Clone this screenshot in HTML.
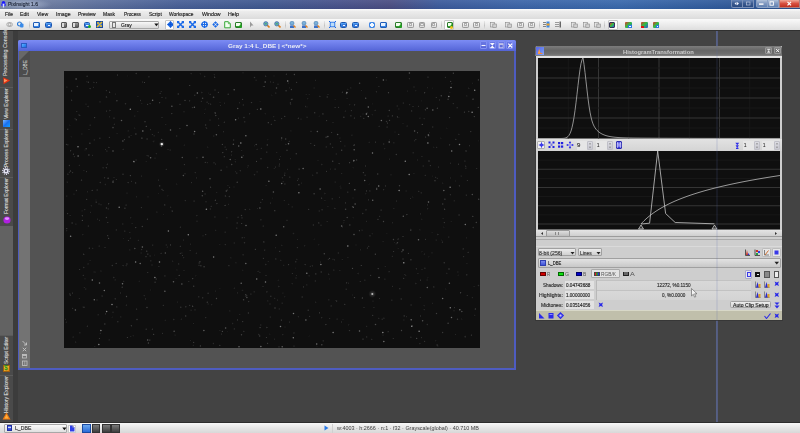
<!DOCTYPE html>
<html><head><meta charset="utf-8"><style>*{margin:0;padding:0;box-sizing:border-box}
html,body{width:800px;height:433px;overflow:hidden;background:#434343;font-family:"Liberation Sans",sans-serif;position:relative}
.a{position:absolute}
.t{position:absolute;white-space:nowrap;line-height:1}
</style></head><body>
<div class="a" style="left:0px;top:0px;width:800px;height:9px;background:linear-gradient(90deg,#8090ac 0,#6a7aa0 50px,#5a6e9c 100px,#465e96 180px,#3e5890 260px,#46508a 340px,#4a4c82 390px,#3a5a9c 440px,#3a64a8 520px,#3868ac 620px,#2f5a9c 720px,#2a4f8c 800px)"></div>
<div class="a" style="left:0px;top:0px;width:800px;height:9px;background:linear-gradient(rgba(255,255,255,0.08),rgba(0,0,0,0.05))"></div>
<div class="a" style="left:2px;top:0px;width:50px;height:9px;background:radial-gradient(ellipse 50% 60% at 50% 50%,rgba(200,212,235,0.55),rgba(200,212,235,0))"></div>
<svg class="a" style="left:0;top:0" width="9" height="9"><circle cx="3.5" cy="2.6" r="1.7" fill="#1a1aff"/><ellipse cx="3.5" cy="4.8" rx="2.5" ry="1.8" fill="#2a2af8"/><path d="M2.6 3.8 H4.4 L4.1 7.6 H2.9Z" fill="#dde4ff"/></svg>
<div class="t" style="left:8.40px;top:1.97px;font-size:5.35px;font-weight:normal;color:#1c2436;transform:scaleX(0.932);transform-origin:0 0;-webkit-text-stroke:0.15px currentColor;">PixInsight 1.6</div>
<div class="a" style="left:730.6px;top:0px;width:12px;height:7.5px;background:linear-gradient(#6a88b8,#3a5a90 50%,#2a4a80);border:0.5px solid #7a90b8;border-top:none;border-radius:0 0 0 2.5px"></div>
<div class="a" style="left:742.6px;top:0px;width:11px;height:7.5px;background:linear-gradient(#6a88b8,#3a5a90 50%,#2a4a80);border:0.5px solid #7a90b8;border-top:none;border-left:none"></div>
<div class="a" style="left:755.6px;top:0px;width:12.4px;height:7.5px;background:linear-gradient(#b0c0d8,#8098c0 50%,#6080b0);border:0.5px solid #8aa0c4;border-top:none;border-radius:0 0 0 2.5px"></div>
<div class="a" style="left:768px;top:0px;width:10.8px;height:7.5px;background:linear-gradient(#b0c0d8,#8098c0 50%,#6080b0);border:0.5px solid #8aa0c4;border-top:none;border-left:none"></div>
<div class="a" style="left:778.8px;top:0px;width:21.2px;height:7.5px;background:linear-gradient(#f0a898,#d85040 50%,#c03020);border:0.5px solid #b08080;border-top:none"></div>
<svg class="a" style="left:730px;top:0" width="70" height="8"><path d="M4.5 3.6 L6.5 2 V5.2Z M9 3.6 L7 2 V5.2Z" fill="#f0f4ff"/><rect x="16.5" y="2" width="3.5" height="3" fill="none" stroke="#b8c4dc" stroke-width="0.7"/><rect x="29" y="3.4" width="4.5" height="1.4" fill="#fff"/><rect x="40" y="1.8" width="3.4" height="3.4" fill="none" stroke="#fff" stroke-width="0.9"/><path d="M57.5 1.8 L61 5.4 M61 1.8 L57.5 5.4" stroke="#fff" stroke-width="1.2"/></svg>
<div class="a" style="left:0px;top:9px;width:800px;height:10px;background:linear-gradient(#fcfcfc 0,#ececec 25%,#dcdcdc 100%)"></div>
<div class="t" style="left:4.60px;top:12.09px;font-size:5.21px;font-weight:normal;color:#1e1e1e;transform:scaleX(0.966);transform-origin:0 0;-webkit-text-stroke:0.15px currentColor;">File</div>
<div class="t" style="left:20.29px;top:12.09px;font-size:5.21px;font-weight:normal;color:#1e1e1e;transform:scaleX(0.995);transform-origin:0 0;-webkit-text-stroke:0.15px currentColor;">Edit</div>
<div class="t" style="left:37.19px;top:12.09px;font-size:5.21px;font-weight:normal;color:#1e1e1e;transform:scaleX(0.994);transform-origin:0 0;-webkit-text-stroke:0.15px currentColor;">View</div>
<div class="t" style="left:55.68px;top:12.09px;font-size:5.21px;font-weight:normal;color:#1e1e1e;transform:scaleX(1.011);transform-origin:0 0;-webkit-text-stroke:0.15px currentColor;">Image</div>
<div class="t" style="left:77.70px;top:12.09px;font-size:5.21px;font-weight:normal;color:#1e1e1e;transform:scaleX(0.950);transform-origin:0 0;-webkit-text-stroke:0.15px currentColor;">Preview</div>
<div class="t" style="left:103.40px;top:12.09px;font-size:5.21px;font-weight:normal;color:#1e1e1e;transform:scaleX(0.957);transform-origin:0 0;-webkit-text-stroke:0.15px currentColor;">Mask</div>
<div class="t" style="left:123.72px;top:12.09px;font-size:5.21px;font-weight:normal;color:#1e1e1e;transform:scaleX(0.903);transform-origin:0 0;-webkit-text-stroke:0.15px currentColor;">Process</div>
<div class="t" style="left:148.50px;top:12.09px;font-size:5.21px;font-weight:normal;color:#1e1e1e;transform:scaleX(0.962);transform-origin:0 0;-webkit-text-stroke:0.15px currentColor;">Script</div>
<div class="t" style="left:169.41px;top:12.09px;font-size:5.21px;font-weight:normal;color:#1e1e1e;transform:scaleX(0.940);transform-origin:0 0;-webkit-text-stroke:0.15px currentColor;">Workspace</div>
<div class="t" style="left:201.99px;top:12.09px;font-size:5.21px;font-weight:normal;color:#1e1e1e;transform:scaleX(1.006);transform-origin:0 0;-webkit-text-stroke:0.15px currentColor;">Window</div>
<div class="t" style="left:228.48px;top:12.09px;font-size:5.21px;font-weight:normal;color:#1e1e1e;transform:scaleX(1.012);transform-origin:0 0;-webkit-text-stroke:0.15px currentColor;">Help</div>
<div class="a" style="left:0px;top:19px;width:800px;height:12px;background:linear-gradient(#fafafa,#dedede);border-bottom:1px solid #303030"></div>
<svg class="a" style="left:5.6px;top:21.3px" width="7" height="7"><circle cx="2.8" cy="3.5" r="2" fill="none" stroke="#a0a0a0" stroke-width="0.8"/><circle cx="4.4" cy="3.5" r="2" fill="none" stroke="#a0a0a0" stroke-width="0.8"/></svg>
<svg class="a" style="left:17px;top:21.3px" width="7" height="7"><circle cx="2.5" cy="3" r="2" fill="none" stroke="#2a7ad8" stroke-width="1.2"/><rect x="3" y="2.5" width="3.5" height="4" fill="#3a8ae8" rx="1"/></svg>
<div class="a" style="left:29px;top:20.5px;width:0.8px;height:9px;background:linear-gradient(#e8e8e8,#c4c4c4,#e8e8e8)"></div>
<div class="a" style="left:33px;top:21.8px;width:6.5px;height:6px;background:linear-gradient(#8cc4f8,#2a7ae0);border:0.6px solid #1e5cb8;border-radius:1px"></div>
<div class="a" style="left:34.3px;top:23.3px;width:4px;height:3px;background:#e8f2ff"></div>
<div class="a" style="left:45px;top:21.6px;width:6.5px;height:6.2px;background:linear-gradient(#5aa8f8,#1a6ad8);border:0.6px solid #1a56b0;border-radius:1.5px"></div>
<div class="a" style="left:46.5px;top:23.8px;width:4.5px;height:3.5px;background:#f4f8ff;border:0.5px solid #3a7ad8"></div>
<div class="a" style="left:55.6px;top:20.5px;width:0.8px;height:9px;background:linear-gradient(#e8e8e8,#c4c4c4,#e8e8e8)"></div>
<div class="a" style="left:60.6px;top:22.0px;width:6.5px;height:5.6px;background:linear-gradient(#9a9a9a,#5a5a5a);border:0.6px solid #555;border-radius:1px"></div>
<div class="a" style="left:61.9px;top:23.0px;width:2.2px;height:3.6px;background:#ddd"></div>
<div class="a" style="left:72px;top:22.0px;width:6.5px;height:5.6px;background:linear-gradient(#9a9a9a,#5a5a5a);border:0.6px solid #555;border-radius:1px"></div>
<div class="a" style="left:73.3px;top:23.0px;width:2.2px;height:3.6px;background:#ddd"></div>
<div class="a" style="left:83.8px;top:21.6px;width:6.5px;height:6.2px;background:linear-gradient(#5aa8f8,#1a6ad8);border:0.6px solid #1a56b0;border-radius:1.5px"></div>
<div class="a" style="left:85.3px;top:23.8px;width:4.5px;height:3.5px;background:#f4f8ff;border:0.5px solid #3a7ad8"></div>
<div class="a" style="left:87.5px;top:25px;width:3px;height:3px;background:#20b020;border-radius:50%"></div>
<div class="a" style="left:95.6px;top:21.3px;width:7px;height:7px;background:linear-gradient(135deg,#2060d0,#3a7ae8);border:0.5px solid #1a4aa0"></div>
<svg class="a" style="left:95.6px;top:21.3px" width="7" height="7"><path d="M1 6 L6 1" stroke="#f0c020" stroke-width="1.4"/><circle cx="2" cy="2" r="1" fill="#f0c020"/><circle cx="5" cy="5" r="1" fill="#f0c020"/></svg>
<div class="a" style="left:109.4px;top:20.7px;width:49.4px;height:8.2px;background:linear-gradient(#f8f8f8,#e4e4e4 60%,#dadada);border:0.6px solid #a8a8a8;border-radius:1px"></div>
<div class="a" style="left:111.9px;top:22px;width:4.6px;height:6px;border:0.6px solid #777;background:#e8e8e8"></div>
<div class="t" style="left:120.71px;top:23.30px;font-size:5.08px;font-weight:normal;color:#222;transform:scaleX(0.961);transform-origin:0 0;-webkit-text-stroke:0.15px currentColor;">Gray</div>
<svg class="a" style="left:153.5px;top:23.3px" width="5" height="4"><path d="M0.3 0.5 H4.5 L2.4 3.3Z" fill="#111"/></svg>
<div class="a" style="left:165px;top:20px;width:9px;height:10px;background:#fdfdfd;border:0.6px solid #c4c4c4;border-radius:1px"></div>
<svg class="a" style="left:166.5px;top:21.3px" width="6" height="7"><path d="M3.5 0 L7 3.5 L3.5 7 L0 3.5Z" fill="#1a6ae8"/><path d="M3.5 0.5 V6.5 M0.5 3.5 H6.5" stroke="#0a4ac8" stroke-width="0.6"/></svg>
<svg class="a" style="left:177px;top:21.3px" width="7" height="7"><path d="M1 1 L6 6 M6 1 L1 6" stroke="#1a6ae8" stroke-width="1.5"/><path d="M0 0 H2.8 L0 2.8Z M7 0 V2.8 L4.2 0Z M0 7 V4.2 L2.8 7Z M7 7 H4.2 L7 4.2Z" fill="#1a6ae8"/></svg>
<svg class="a" style="left:189px;top:21.3px" width="7" height="7"><path d="M1 1 L6 6 M6 1 L1 6" stroke="#1a6ae8" stroke-width="1.5"/><path d="M0 0 H2.8 L0 2.8Z M7 0 V2.8 L4.2 0Z M0 7 V4.2 L2.8 7Z M7 7 H4.2 L7 4.2Z" fill="#1a6ae8"/></svg>
<svg class="a" style="left:200.6px;top:21.3px" width="7" height="7"><circle cx="3.5" cy="3.5" r="2.6" fill="none" stroke="#1a6ae8" stroke-width="1.4"/><path d="M3.5 0 V7 M0 3.5 H7" stroke="#1a6ae8" stroke-width="1"/></svg>
<svg class="a" style="left:212.3px;top:21.3px" width="7" height="7"><path d="M3.5 0.3 L5.3 2 H4.3 V2.8 H2.7 V2 H1.7Z M3.5 6.7 L5.3 5 H4.3 V4.2 H2.7 V5 H1.7Z M0.3 3.5 L2 1.7 V2.7 H2.8 V4.3 H2 V5.3Z M6.7 3.5 L5 1.7 V2.7 H4.2 V4.3 H5 V5.3Z" fill="#1a6ae8"/></svg>
<svg class="a" style="left:223.8px;top:21.3px" width="7" height="7.5"><path d="M0.7 0.7 H4.3 L6.3 2.7 V6.8 H0.7Z" fill="#f2fff0" stroke="#38a838" stroke-width="1"/><path d="M4.3 0.7 V2.7 H6.3" fill="#9ad890" stroke="#38a838" stroke-width="0.6"/></svg>
<div class="a" style="left:235px;top:21.6px;width:6.5px;height:6.3px;background:linear-gradient(#8ae07a,#2a9a2a);border:0.6px solid #2a7a2a;border-radius:1px"></div>
<div class="a" style="left:236.3px;top:22.8px;width:4px;height:3px;background:#f4fff0"></div>
<div class="a" style="left:238.5px;top:24.8px;width:3px;height:3px;background:#20a020;border-radius:50%"></div>
<svg class="a" style="left:248.7px;top:21.3px" width="5" height="7"><path d="M1 0.5 L4.5 4.5 L2.5 4.5 L1 6.5Z" fill="#9a9a9a"/></svg>
<div class="a" style="left:258.7px;top:20.5px;width:0.8px;height:9px;background:linear-gradient(#e8e8e8,#c4c4c4,#e8e8e8)"></div>
<svg class="a" style="left:262.5px;top:21.3px" width="7" height="7"><path d="M3.5 3.5 L6.5 6.5" stroke="#e08020" stroke-width="1.6"/><circle cx="2.8" cy="2.8" r="2.2" fill="#6aa0c8" stroke="#3a6a98" stroke-width="0.6"/><path d="M1.8 2.8 H3.8" stroke="#30c030" stroke-width="0.8"/></svg>
<svg class="a" style="left:274.4px;top:21.3px" width="7" height="7"><path d="M3.5 3.5 L6.5 6.5" stroke="#e08020" stroke-width="1.6"/><circle cx="2.8" cy="2.8" r="2.2" fill="#6aa0c8" stroke="#3a6a98" stroke-width="0.6"/><path d="M1.8 2.8 H3.8" stroke="#30c030" stroke-width="0.8"/></svg>
<div class="a" style="left:285px;top:20.5px;width:0.8px;height:9px;background:linear-gradient(#e8e8e8,#c4c4c4,#e8e8e8)"></div>
<svg class="a" style="left:289.4px;top:21.3px" width="7" height="7"><circle cx="3" cy="2.2" r="2" fill="#7ab0d8" stroke="#3a70a8" stroke-width="0.5"/><path d="M1 7 V4.5 H5 V7" fill="#3a70c8"/><path d="M4.5 4.5 L6.5 6.5" stroke="#e08020" stroke-width="1.4"/></svg>
<svg class="a" style="left:300.6px;top:21.3px" width="7" height="7"><circle cx="3" cy="2.2" r="2" fill="#7ab0d8" stroke="#3a70a8" stroke-width="0.5"/><path d="M1 7 V4.5 H5 V7" fill="#3a70c8"/><path d="M4.5 4.5 L6.5 6.5" stroke="#e08020" stroke-width="1.4"/></svg>
<svg class="a" style="left:312.5px;top:21.3px" width="7" height="7"><circle cx="3" cy="2.2" r="2" fill="#7ab0d8" stroke="#3a70a8" stroke-width="0.5"/><path d="M1 7 V4.5 H5 V7" fill="#3a70c8"/><path d="M4.5 4.5 L6.5 6.5" stroke="#e08020" stroke-width="1.4"/></svg>
<div class="a" style="left:324.4px;top:20.5px;width:0.8px;height:9px;background:linear-gradient(#e8e8e8,#c4c4c4,#e8e8e8)"></div>
<svg class="a" style="left:328.7px;top:21.3px" width="7" height="7"><rect x="1.2" y="1.2" width="4.6" height="4.6" fill="#bcdcf8" stroke="#1a6ae8" stroke-width="0.8"/><path d="M0 0 L1.5 1.5 M7 0 L5.5 1.5 M0 7 L1.5 5.5 M7 7 L5.5 5.5" stroke="#1a6ae8" stroke-width="1"/></svg>
<div class="a" style="left:340px;top:21.6px;width:6.5px;height:6.2px;background:linear-gradient(#5aa8f8,#1a6ad8);border:0.6px solid #1a56b0;border-radius:1.5px"></div>
<div class="a" style="left:341.5px;top:23.8px;width:4.5px;height:3.5px;background:#f4f8ff;border:0.5px solid #3a7ad8"></div>
<div class="a" style="left:352px;top:21.6px;width:6.5px;height:6.2px;background:linear-gradient(#5aa8f8,#1a6ad8);border:0.6px solid #1a56b0;border-radius:1.5px"></div>
<div class="a" style="left:353.5px;top:23.8px;width:4.5px;height:3.5px;background:#f4f8ff;border:0.5px solid #3a7ad8"></div>
<div class="a" style="left:363.5px;top:20.5px;width:0.8px;height:9px;background:linear-gradient(#e8e8e8,#c4c4c4,#e8e8e8)"></div>
<div class="a" style="left:368.7px;top:21.8px;width:6.5px;height:6px;background:radial-gradient(circle at 50% 50%,#f4f8ff 0,#f4f8ff 1.6px,#4a9af0 2px,#2a6ad8 3.5px);border-radius:2px"></div>
<div class="a" style="left:380px;top:21.8px;width:6.5px;height:6px;background:linear-gradient(#8cc4f8,#2a7ae0);border:0.6px solid #1e5cb8;border-radius:1px"></div>
<div class="a" style="left:381.3px;top:23.3px;width:4px;height:3px;background:#e8f2ff"></div>
<div class="a" style="left:390.6px;top:20.5px;width:0.8px;height:9px;background:linear-gradient(#e8e8e8,#c4c4c4,#e8e8e8)"></div>
<div class="a" style="left:395px;top:21.6px;width:6.5px;height:6.3px;background:linear-gradient(#8ae07a,#2a9a2a);border:0.6px solid #2a7a2a;border-radius:1px"></div>
<div class="a" style="left:396.3px;top:22.8px;width:4px;height:3px;background:#f4fff0"></div>
<div class="a" style="left:398.5px;top:24.8px;width:3px;height:3px;background:#20a020;border-radius:50%"></div>
<div class="a" style="left:407px;top:21.8px;width:6.5px;height:6px;background:linear-gradient(#fafafa,#dcdcdc);border:0.7px solid #9a9a9a;border-radius:1.2px"></div>
<div class="a" style="left:408.6px;top:23.3px;width:3.3px;height:3px;border:0.5px solid #b0b0b0;background:#eee"></div>
<div class="a" style="left:418.7px;top:21.8px;width:6.5px;height:6px;background:linear-gradient(#fafafa,#dcdcdc);border:0.7px solid #9a9a9a;border-radius:1.2px"></div>
<div class="a" style="left:420.3px;top:23.3px;width:3.3px;height:3px;border:0.5px solid #b0b0b0;background:#eee"></div>
<div class="a" style="left:430.6px;top:21.8px;width:6.5px;height:6px;background:linear-gradient(#fafafa,#dcdcdc);border:0.7px solid #9a9a9a;border-radius:1.2px"></div>
<div class="a" style="left:432.20000000000005px;top:23.3px;width:3.3px;height:3px;border:0.5px solid #b0b0b0;background:#eee"></div>
<div class="a" style="left:441px;top:20.5px;width:0.8px;height:9px;background:linear-gradient(#e8e8e8,#c4c4c4,#e8e8e8)"></div>
<div class="a" style="left:444.4px;top:20px;width:10.0px;height:10px;background:#fdfdfd;border:0.6px solid #c4c4c4;border-radius:1px"></div>
<div class="a" style="left:446.5px;top:21.6px;width:6.0px;height:6.3px;background:linear-gradient(#8ae07a,#2a9a2a);border:0.6px solid #2a7a2a;border-radius:1px"></div>
<div class="a" style="left:447.8px;top:22.8px;width:3.5px;height:3px;background:#f4fff0"></div>
<div class="a" style="left:450.0px;top:24.8px;width:3px;height:3px;background:#20a020;border-radius:50%"></div>
<div class="a" style="left:450px;top:25.5px;width:3px;height:3px;background:#f0c020;border-radius:50%"></div>
<div class="a" style="left:457.5px;top:20.5px;width:0.8px;height:9px;background:linear-gradient(#e8e8e8,#c4c4c4,#e8e8e8)"></div>
<div class="a" style="left:462px;top:21.8px;width:6.5px;height:6px;background:linear-gradient(#fafafa,#dcdcdc);border:0.7px solid #9a9a9a;border-radius:1.2px"></div>
<div class="a" style="left:463.6px;top:23.3px;width:3.3px;height:3px;border:0.5px solid #b0b0b0;background:#eee"></div>
<div class="a" style="left:473px;top:21.8px;width:6.5px;height:6px;background:linear-gradient(#fafafa,#dcdcdc);border:0.7px solid #9a9a9a;border-radius:1.2px"></div>
<div class="a" style="left:474.6px;top:23.3px;width:3.3px;height:3px;border:0.5px solid #b0b0b0;background:#eee"></div>
<div class="a" style="left:484px;top:20.5px;width:0.8px;height:9px;background:linear-gradient(#e8e8e8,#c4c4c4,#e8e8e8)"></div>
<svg class="a" style="left:490px;top:21.3px" width="7" height="7"><rect x="0.5" y="1.5" width="4" height="4.5" fill="#e4e4e4" stroke="#888" stroke-width="0.6"/><rect x="2.8" y="3" width="3.6" height="3.5" fill="#cfcfcf" stroke="#888" stroke-width="0.6"/></svg>
<svg class="a" style="left:505px;top:21.3px" width="7" height="7"><rect x="0.5" y="1.5" width="4" height="4.5" fill="#e4e4e4" stroke="#888" stroke-width="0.6"/><rect x="2.8" y="3" width="3.6" height="3.5" fill="#cfcfcf" stroke="#888" stroke-width="0.6"/></svg>
<div class="a" style="left:517px;top:21.8px;width:6.5px;height:6px;background:linear-gradient(#fafafa,#dcdcdc);border:0.7px solid #9a9a9a;border-radius:1.2px"></div>
<div class="a" style="left:518.6px;top:23.3px;width:3.3px;height:3px;border:0.5px solid #b0b0b0;background:#eee"></div>
<div class="a" style="left:528px;top:21.8px;width:6.5px;height:6px;background:linear-gradient(#fafafa,#dcdcdc);border:0.7px solid #9a9a9a;border-radius:1.2px"></div>
<div class="a" style="left:529.6px;top:23.3px;width:3.3px;height:3px;border:0.5px solid #b0b0b0;background:#eee"></div>
<div class="a" style="left:539px;top:20.5px;width:0.8px;height:9px;background:linear-gradient(#e8e8e8,#c4c4c4,#e8e8e8)"></div>
<svg class="a" style="left:543px;top:21.3px" width="7" height="7"><path d="M0 1.5 H3 M0 3.5 H3 M0 5.5 H3" stroke="#555" stroke-width="0.7"/><rect x="3.5" y="0.5" width="3" height="6" fill="#3a8ae8"/><rect x="3.5" y="2.5" width="3" height="2" fill="#f0a020"/></svg>
<svg class="a" style="left:555px;top:21.3px" width="7" height="7"><path d="M0 1.5 H4 M0 3.5 H4 M0 5.5 H4" stroke="#777" stroke-width="0.7"/><rect x="4.5" y="0.5" width="1.5" height="6" fill="#666"/></svg>
<div class="a" style="left:565.6px;top:20.5px;width:0.8px;height:9px;background:linear-gradient(#e8e8e8,#c4c4c4,#e8e8e8)"></div>
<svg class="a" style="left:571px;top:21.3px" width="7" height="7"><rect x="0.5" y="1.5" width="4" height="4.5" fill="#e4e4e4" stroke="#888" stroke-width="0.6"/><rect x="2.8" y="3" width="3.6" height="3.5" fill="#cfcfcf" stroke="#888" stroke-width="0.6"/></svg>
<svg class="a" style="left:582.5px;top:21.3px" width="7" height="7"><rect x="0.5" y="1.5" width="4" height="4.5" fill="#e4e4e4" stroke="#888" stroke-width="0.6"/><rect x="2.8" y="3" width="3.6" height="3.5" fill="#cfcfcf" stroke="#888" stroke-width="0.6"/></svg>
<svg class="a" style="left:594px;top:21.3px" width="7" height="7"><rect x="0.5" y="1.5" width="4" height="4.5" fill="#e4e4e4" stroke="#888" stroke-width="0.6"/><rect x="2.8" y="3" width="3.6" height="3.5" fill="#cfcfcf" stroke="#888" stroke-width="0.6"/></svg>
<div class="a" style="left:604px;top:20.5px;width:0.8px;height:9px;background:linear-gradient(#e8e8e8,#c4c4c4,#e8e8e8)"></div>
<div class="a" style="left:607.5px;top:20px;width:10.0px;height:10px;background:#fdfdfd;border:0.6px solid #c4c4c4;border-radius:1px"></div>
<div class="a" style="left:609.3px;top:21.6px;width:6.0px;height:6.3px;background:linear-gradient(135deg,#e03030,#30c040 50%,#3050e0);border:0.5px solid #335;border-radius:1px"></div>
<div class="a" style="left:625px;top:21.6px;width:6.5px;height:6.3px;background:linear-gradient(135deg,#e03030,#30c040 50%,#3050e0);border-radius:1px"></div>
<div class="a" style="left:628px;top:24.6px;width:3.5px;height:3px;background:#fff;border:0.6px solid #2a7ae0"></div>
<div class="a" style="left:635.6px;top:20.5px;width:0.8px;height:9px;background:linear-gradient(#e8e8e8,#c4c4c4,#e8e8e8)"></div>
<div class="a" style="left:641px;top:21.6px;width:6.5px;height:6.3px;background:linear-gradient(135deg,#e03030,#30c040 45%,#3050e0);border-radius:1px"></div>
<div class="a" style="left:641px;top:25.8px;width:2.5px;height:2.2px;background:#e01010"></div>
<div class="a" style="left:652.5px;top:21.6px;width:6.5px;height:6.3px;background:linear-gradient(135deg,#e03030,#30c040 50%,#3050e0);border-radius:1px"></div>
<div class="a" style="left:655.5px;top:24.6px;width:3.5px;height:3px;background:#fff;border:0.6px solid #2a7ae0"></div>
<div class="a" style="left:0px;top:31px;width:13px;height:391px;background:#4a4a4a"></div>
<div class="a" style="left:13px;top:31px;width:5px;height:391px;background:#3c3c3c"></div>
<div class="a" style="left:0px;top:225.5px;width:12.7px;height:109.5px;background:#626262"></div>
<div class="a" style="left:0px;top:86.5px;width:12.7px;height:0.8px;background:#5a5a5a"></div>
<div class="a" style="left:0px;top:128.6px;width:12.7px;height:0.8px;background:#5a5a5a"></div>
<div class="a" style="left:0px;top:177px;width:12.7px;height:0.8px;background:#5a5a5a"></div>
<div class="a" style="left:0px;top:335px;width:12.7px;height:0.8px;background:#5a5a5a"></div>
<div class="a" style="left:0px;top:374.5px;width:12.7px;height:0.8px;background:#5a5a5a"></div>
<div class="t" style="left:3.3px;top:76.3px;font-size:5.35px;color:#dcdcdc;-webkit-text-stroke:0.1px currentColor;transform:rotate(-90deg);transform-origin:0 0">Processing Console</div>
<svg class="a" style="left:2.5px;top:76.8px" width="8" height="8"><path d="M0.3 0.3 L7.2 3.6 L0.6 7.2 Z" fill="#e83010"/><path d="M1 1.8 L4.5 3.6 L1 5.5Z" fill="#ff9860"/></svg>
<div class="t" style="left:3.5px;top:118.5px;font-size:5.0px;color:#dcdcdc;-webkit-text-stroke:0.1px currentColor;transform:rotate(-90deg);transform-origin:0 0">View Explorer</div>
<div class="a" style="left:2.8px;top:119.8px;width:7px;height:6.8px;background:linear-gradient(135deg,#7ab8ff,#1a70f0 50%,#10a0ff)"></div>
<div class="t" style="left:3.5px;top:167px;font-size:5.0px;color:#dcdcdc;-webkit-text-stroke:0.1px currentColor;transform:rotate(-90deg);transform-origin:0 0">Process Explorer</div>
<svg class="a" style="left:2.2px;top:167.4px" width="8" height="8"><circle cx="4" cy="4" r="2.6" fill="#e4e4f4"/><circle cx="4" cy="4" r="3.3" fill="none" stroke="#d8d8ee" stroke-width="1.2" stroke-dasharray="1.1 0.9"/><circle cx="4" cy="4" r="0.9" fill="#303040"/></svg>
<div class="t" style="left:3.5px;top:214px;font-size:5.0px;color:#dcdcdc;-webkit-text-stroke:0.1px currentColor;transform:rotate(-90deg);transform-origin:0 0">Format Explorer</div>
<svg class="a" style="left:2.5px;top:216px" width="8" height="8"><circle cx="4" cy="4" r="3.6" fill="#b020e0"/><ellipse cx="4" cy="2.6" rx="2.2" ry="1.3" fill="#e090ff"/></svg>
<div class="t" style="left:3.5px;top:363.5px;font-size:5.0px;color:#dcdcdc;-webkit-text-stroke:0.1px currentColor;transform:rotate(-90deg);transform-origin:0 0">Script Editor</div>
<div class="a" style="left:2.5px;top:364.5px;width:7.5px;height:7.5px;background:linear-gradient(135deg,#ffd040,#e08010);border:0.5px solid #a06010"></div>
<div class="t" style="left:4px;top:365px;font-size:6.5px;font-weight:bold;color:#1a9a1a">$</div>
<div class="t" style="left:3.5px;top:412.5px;font-size:5.2px;color:#dcdcdc;-webkit-text-stroke:0.1px currentColor;transform:rotate(-90deg);transform-origin:0 0">History Explorer</div>
<svg class="a" style="left:2px;top:412px" width="9" height="8"><path d="M4.5 0.5 L8.5 7.5 L0.5 7.5Z" fill="#f07a10"/><path d="M4.5 2.5 L6.5 6.5 L2.5 6.5Z" fill="#ffb040"/></svg>
<div class="a" style="left:18px;top:40px;width:498px;height:330px;background:#4e5cc0;border-radius:2px 2px 0 0"></div>
<div class="a" style="left:18px;top:40px;width:498px;height:10.5px;background:linear-gradient(#7c8cf4,#6878e6 50%,#5464d6);border-radius:2px 2px 0 0"></div>
<div class="a" style="left:20.5px;top:42.9px;width:6.3px;height:5.5px;background:linear-gradient(135deg,#5ab4ff,#1a6ae8);border:0.5px solid #2a5ac0"></div>
<div class="t" style="left:227.62px;top:44.25px;font-size:5.14px;font-weight:bold;color:#eaecf6;transform:scaleX(1.246);transform-origin:0 0;">Gray 1:4 L_DBE | &lt;*new*&gt;</div>
<div class="a" style="left:479.7px;top:41.4px;width:7.2px;height:7.6px;background:linear-gradient(#6a78e4,#5866d8);border:0.6px solid #8290f2;border-radius:1px"></div>
<div class="a" style="left:488.6px;top:41.4px;width:7.2px;height:7.6px;background:linear-gradient(#6a78e4,#5866d8);border:0.6px solid #8290f2;border-radius:1px"></div>
<div class="a" style="left:497.5px;top:41.4px;width:7.2px;height:7.6px;background:linear-gradient(#6a78e4,#5866d8);border:0.6px solid #8290f2;border-radius:1px"></div>
<div class="a" style="left:506.2px;top:41.4px;width:7.2px;height:7.6px;background:linear-gradient(#6a78e4,#5866d8);border:0.6px solid #8290f2;border-radius:1px"></div>
<svg class="a" style="left:479px;top:41px" width="37" height="9"><path d="M2.5 4.5 H6.5" stroke="#f4f4ff" stroke-width="1.1"/><path d="M11.3 2.6 H15.3 M11.3 6.6 H15.3" stroke="#fff" stroke-width="1"/><path d="M11.8 3 L13.3 4.6 L14.8 3Z M11.8 6.2 L13.3 4.6 L14.8 6.2Z" fill="#fff"/><rect x="20.3" y="2.7" width="3.8" height="4" fill="none" stroke="#c8c8e8" stroke-width="0.8"/><rect x="20.3" y="2.7" width="3.8" height="1.2" fill="#c8c8e8"/><path d="M29.3 2.7 L33.1 6.5 M33.1 2.7 L29.3 6.5" stroke="#fff" stroke-width="1.2"/></svg>
<div class="a" style="left:19.2px;top:50.5px;width:495.3px;height:317.9px;background:#535353"></div>
<div class="a" style="left:19.2px;top:50.5px;width:10.8px;height:317.9px;background:#737373"></div>
<div class="a" style="left:19.2px;top:50.5px;width:10.8px;height:26.2px;background:#4c4c4c"></div>
<div class="a" style="left:19.2px;top:50.5px;width:0px;height:0px;border-top:10px solid #686868;border-right:10px solid transparent"></div>
<div class="t" style="left:22.6px;top:75.3px;font-size:5.1px;color:#ececec;transform:rotate(-90deg) scaleX(0.92);transform-origin:0 0">L_DBE</div>
<svg class="a" style="left:21px;top:340px" width="8" height="28"><path d="M1.5 1 L5.5 5 M5.5 2.5 V5 H3" stroke="#c4c4c4" stroke-width="0.9" fill="none"/><path d="M1.8 7.8 L5.2 11.2 M5.2 7.8 L1.8 11.2" stroke="#c4c4c4" stroke-width="0.9"/><rect x="1.5" y="14.5" width="4" height="3.5" fill="none" stroke="#c4c4c4" stroke-width="0.8"/><rect x="1.5" y="14.5" width="4" height="1.4" fill="#c4c4c4"/><rect x="1.5" y="21" width="4.5" height="4.5" fill="none" stroke="#c4c4c4" stroke-width="0.8"/><path d="M3.75 21 V25.5" stroke="#c4c4c4" stroke-width="0.6"/></svg>
<svg class="a" style="left:63.5px;top:70.5px" width="416.5" height="277"><defs><radialGradient id="sg"><stop offset="0" stop-color="#fff"/><stop offset="0.3" stop-color="#bbb" stop-opacity="0.7"/><stop offset="1" stop-color="#888" stop-opacity="0"/></radialGradient><filter id="bl" x="-5%" y="-5%" width="110%" height="110%"><feGaussianBlur stdDeviation="0.35"/></filter></defs><rect width="416.5" height="277" fill="#0f0f0f"/><g filter="url(#bl)"><circle cx="195.9" cy="201.3" r="0.55" fill="#353535"/><circle cx="300.9" cy="209.2" r="0.63" fill="#323232"/><circle cx="264.7" cy="203.2" r="0.60" fill="#383838"/><circle cx="302.7" cy="265.9" r="0.64" fill="#353535"/><circle cx="137.9" cy="21.5" r="0.67" fill="#2f2f2f"/><circle cx="302.6" cy="255.3" r="0.63" fill="#2b2b2b"/><circle cx="360.6" cy="270.3" r="0.66" fill="#383838"/><circle cx="194.1" cy="200.5" r="0.69" fill="#2a2a2a"/><circle cx="162.8" cy="96.0" r="0.58" fill="#2e2e2e"/><circle cx="172.8" cy="157.1" r="0.56" fill="#3c3c3c"/><circle cx="17.8" cy="62.9" r="0.74" fill="#232323"/><circle cx="108.3" cy="140.1" r="0.70" fill="#464646"/><circle cx="175.5" cy="31.8" r="0.56" fill="#303030"/><circle cx="193.4" cy="38.4" r="0.62" fill="#393939"/><circle cx="347.7" cy="39.9" r="0.66" fill="#3a3a3a"/><circle cx="140.1" cy="195.8" r="0.72" fill="#3f3f3f"/><circle cx="284.5" cy="212.2" r="0.58" fill="#2a2a2a"/><circle cx="86.8" cy="189.8" r="0.74" fill="#282828"/><circle cx="73.0" cy="248.5" r="0.68" fill="#3e3e3e"/><circle cx="146.2" cy="23.4" r="0.56" fill="#343434"/><circle cx="192.2" cy="73.5" r="0.72" fill="#434343"/><circle cx="276.2" cy="115.1" r="0.58" fill="#262626"/><circle cx="116.4" cy="156.2" r="0.63" fill="#323232"/><circle cx="206.3" cy="246.0" r="0.54" fill="#3a3a3a"/><circle cx="353.4" cy="89.0" r="0.64" fill="#242424"/><circle cx="387.3" cy="150.6" r="0.53" fill="#262626"/><circle cx="24.1" cy="35.5" r="0.73" fill="#2f2f2f"/><circle cx="255.9" cy="25.2" r="0.54" fill="#424242"/><circle cx="203.3" cy="220.7" r="0.54" fill="#2c2c2c"/><circle cx="52.9" cy="29.7" r="0.70" fill="#454545"/><circle cx="251.5" cy="9.3" r="0.64" fill="#282828"/><circle cx="226.6" cy="87.6" r="0.57" fill="#292929"/><circle cx="76.5" cy="29.5" r="0.64" fill="#2f2f2f"/><circle cx="268.2" cy="127.8" r="0.58" fill="#404040"/><circle cx="304.7" cy="175.4" r="0.60" fill="#2f2f2f"/><circle cx="360.2" cy="238.5" r="0.72" fill="#2a2a2a"/><circle cx="67.5" cy="110.4" r="0.59" fill="#2d2d2d"/><circle cx="285.6" cy="33.8" r="0.69" fill="#222222"/><circle cx="312.7" cy="116.3" r="0.55" fill="#242424"/><circle cx="193.6" cy="137.5" r="0.61" fill="#252525"/><circle cx="5.4" cy="94.5" r="0.67" fill="#323232"/><circle cx="66.3" cy="167.2" r="0.71" fill="#282828"/><circle cx="351.8" cy="19.6" r="0.54" fill="#2a2a2a"/><circle cx="358.0" cy="85.5" r="0.62" fill="#323232"/><circle cx="151.4" cy="129.2" r="0.74" fill="#3d3d3d"/><circle cx="255.2" cy="45.0" r="0.53" fill="#292929"/><circle cx="177.5" cy="263.7" r="0.68" fill="#424242"/><circle cx="23.5" cy="120.8" r="0.70" fill="#232323"/><circle cx="369.8" cy="76.2" r="0.58" fill="#292929"/><circle cx="361.4" cy="38.8" r="0.65" fill="#464646"/><circle cx="179.8" cy="260.4" r="0.61" fill="#333333"/><circle cx="67.1" cy="64.5" r="0.63" fill="#222222"/><circle cx="83.4" cy="148.2" r="0.61" fill="#3c3c3c"/><circle cx="327.8" cy="229.2" r="0.64" fill="#313131"/><circle cx="318.2" cy="248.2" r="0.65" fill="#333333"/><circle cx="187.5" cy="31.6" r="0.69" fill="#3b3b3b"/><circle cx="132.9" cy="144.6" r="0.71" fill="#313131"/><circle cx="334.7" cy="63.4" r="0.64" fill="#3f3f3f"/><circle cx="119.7" cy="186.7" r="0.62" fill="#2e2e2e"/><circle cx="225.2" cy="70.4" r="0.57" fill="#2f2f2f"/><circle cx="215.7" cy="180.4" r="0.67" fill="#343434"/><circle cx="334.8" cy="37.9" r="0.63" fill="#272727"/><circle cx="193.1" cy="78.3" r="0.66" fill="#313131"/><circle cx="162.4" cy="78.5" r="0.74" fill="#2d2d2d"/><circle cx="378.7" cy="132.9" r="0.74" fill="#393939"/><circle cx="248.7" cy="104.2" r="0.69" fill="#262626"/><circle cx="375.4" cy="28.9" r="0.55" fill="#363636"/><circle cx="319.0" cy="264.1" r="0.51" fill="#323232"/><circle cx="266.3" cy="72.9" r="0.55" fill="#434343"/><circle cx="354.7" cy="120.4" r="0.68" fill="#2e2e2e"/><circle cx="343.4" cy="20.1" r="0.53" fill="#292929"/><circle cx="112.1" cy="207.2" r="0.56" fill="#282828"/><circle cx="243.1" cy="46.2" r="0.70" fill="#2a2a2a"/><circle cx="386.5" cy="107.0" r="0.74" fill="#282828"/><circle cx="141.3" cy="91.4" r="0.64" fill="#373737"/><circle cx="312.7" cy="6.5" r="0.60" fill="#333333"/><circle cx="237.0" cy="48.0" r="0.55" fill="#323232"/><circle cx="373.4" cy="37.3" r="0.69" fill="#3d3d3d"/><circle cx="80.2" cy="224.6" r="0.56" fill="#303030"/><circle cx="265.5" cy="187.4" r="0.63" fill="#3d3d3d"/><circle cx="15.0" cy="43.8" r="0.62" fill="#393939"/><circle cx="121.7" cy="244.9" r="0.73" fill="#3e3e3e"/><circle cx="269.0" cy="188.3" r="0.55" fill="#343434"/><circle cx="270.9" cy="137.3" r="0.63" fill="#393939"/><circle cx="151.8" cy="44.5" r="0.68" fill="#424242"/><circle cx="405.5" cy="74.7" r="0.61" fill="#2d2d2d"/><circle cx="136.3" cy="2.8" r="0.61" fill="#292929"/><circle cx="117.8" cy="181.9" r="0.68" fill="#272727"/><circle cx="35.0" cy="132.9" r="0.63" fill="#2f2f2f"/><circle cx="280.7" cy="233.4" r="0.66" fill="#363636"/><circle cx="263.9" cy="135.3" r="0.67" fill="#252525"/><circle cx="280.0" cy="149.4" r="0.58" fill="#313131"/><circle cx="414.8" cy="69.9" r="0.54" fill="#242424"/><circle cx="223.0" cy="149.3" r="0.59" fill="#383838"/><circle cx="23.1" cy="5.2" r="0.69" fill="#363636"/><circle cx="82.2" cy="258.2" r="0.63" fill="#3f3f3f"/><circle cx="409.0" cy="28.4" r="0.66" fill="#404040"/><circle cx="164.0" cy="114.4" r="0.53" fill="#2a2a2a"/><circle cx="6.5" cy="100.1" r="0.73" fill="#3c3c3c"/><circle cx="52.8" cy="235.9" r="0.58" fill="#3e3e3e"/><circle cx="306.0" cy="164.8" r="0.60" fill="#434343"/><circle cx="260.9" cy="122.5" r="0.71" fill="#2a2a2a"/><circle cx="211.8" cy="187.9" r="0.62" fill="#3c3c3c"/><circle cx="165.3" cy="125.5" r="0.73" fill="#303030"/><circle cx="352.6" cy="267.4" r="0.70" fill="#434343"/><circle cx="397.7" cy="248.0" r="0.59" fill="#292929"/><circle cx="360.1" cy="234.7" r="0.58" fill="#262626"/><circle cx="329.5" cy="168.5" r="0.71" fill="#404040"/><circle cx="324.2" cy="260.7" r="0.66" fill="#333333"/><circle cx="301.1" cy="104.2" r="0.73" fill="#323232"/><circle cx="8.7" cy="237.2" r="0.54" fill="#3d3d3d"/><circle cx="63.8" cy="5.0" r="0.57" fill="#222222"/><circle cx="45.4" cy="45.7" r="0.56" fill="#303030"/><circle cx="214.9" cy="215.4" r="0.74" fill="#2b2b2b"/><circle cx="350.7" cy="69.8" r="0.52" fill="#383838"/><circle cx="154.4" cy="47.8" r="0.56" fill="#393939"/><circle cx="6.3" cy="224.1" r="0.69" fill="#424242"/><circle cx="180.5" cy="171.8" r="0.70" fill="#313131"/><circle cx="281.3" cy="40.0" r="0.57" fill="#383838"/><circle cx="2.3" cy="251.1" r="0.59" fill="#313131"/><circle cx="25.0" cy="58.5" r="0.65" fill="#262626"/><circle cx="51.7" cy="23.1" r="0.56" fill="#272727"/><circle cx="314.8" cy="247.4" r="0.66" fill="#2c2c2c"/><circle cx="88.0" cy="193.9" r="0.62" fill="#303030"/><circle cx="170.4" cy="172.0" r="0.69" fill="#272727"/><circle cx="174.1" cy="146.2" r="0.63" fill="#3a3a3a"/><circle cx="342.4" cy="245.6" r="0.56" fill="#2b2b2b"/><circle cx="308.4" cy="43.7" r="0.67" fill="#232323"/><circle cx="414.3" cy="36.4" r="0.67" fill="#3c3c3c"/><circle cx="346.9" cy="188.8" r="0.71" fill="#3b3b3b"/><circle cx="66.4" cy="104.6" r="0.66" fill="#464646"/><circle cx="302.6" cy="150.3" r="0.58" fill="#2b2b2b"/><circle cx="262.5" cy="100.3" r="0.62" fill="#383838"/><circle cx="241.6" cy="35.5" r="0.70" fill="#2a2a2a"/><circle cx="44.6" cy="167.4" r="0.68" fill="#3f3f3f"/><circle cx="234.9" cy="113.7" r="0.74" fill="#3e3e3e"/><circle cx="202.9" cy="256.5" r="0.71" fill="#363636"/><circle cx="218.2" cy="232.1" r="0.65" fill="#303030"/><circle cx="395.4" cy="114.8" r="0.62" fill="#424242"/><circle cx="214.0" cy="13.2" r="0.67" fill="#2c2c2c"/><circle cx="372.7" cy="76.3" r="0.64" fill="#303030"/><circle cx="283.8" cy="121.1" r="0.59" fill="#3f3f3f"/><circle cx="377.3" cy="24.7" r="0.72" fill="#434343"/><circle cx="140.7" cy="5.5" r="0.69" fill="#2e2e2e"/><circle cx="399.2" cy="177.9" r="0.61" fill="#3e3e3e"/><circle cx="400.4" cy="41.1" r="0.60" fill="#454545"/><circle cx="112.9" cy="198.9" r="0.54" fill="#272727"/><circle cx="35.4" cy="267.6" r="0.51" fill="#454545"/><circle cx="283.9" cy="186.5" r="0.54" fill="#2c2c2c"/><circle cx="107.8" cy="42.6" r="0.58" fill="#444444"/><circle cx="325.1" cy="200.7" r="0.62" fill="#373737"/><circle cx="78.1" cy="67.2" r="0.61" fill="#3a3a3a"/><circle cx="214.3" cy="209.2" r="0.60" fill="#242424"/><circle cx="70.6" cy="57.1" r="0.71" fill="#242424"/><circle cx="45.9" cy="39.5" r="0.73" fill="#2f2f2f"/><circle cx="339.0" cy="52.4" r="0.53" fill="#292929"/><circle cx="7.6" cy="29.2" r="0.71" fill="#303030"/><circle cx="361.5" cy="168.3" r="0.55" fill="#3f3f3f"/><circle cx="84.2" cy="84.9" r="0.60" fill="#383838"/><circle cx="414.4" cy="8.9" r="0.71" fill="#434343"/><circle cx="313.7" cy="102.9" r="0.74" fill="#3c3c3c"/><circle cx="84.0" cy="125.9" r="0.57" fill="#272727"/><circle cx="349.0" cy="35.4" r="0.67" fill="#2c2c2c"/><circle cx="333.5" cy="171.8" r="0.71" fill="#434343"/><circle cx="165.8" cy="239.9" r="0.53" fill="#2f2f2f"/><circle cx="278.4" cy="21.2" r="0.71" fill="#313131"/><circle cx="11.6" cy="271.0" r="0.62" fill="#313131"/><circle cx="276.9" cy="116.9" r="0.51" fill="#2f2f2f"/><circle cx="268.7" cy="76.3" r="0.61" fill="#363636"/><circle cx="331.0" cy="60.9" r="0.64" fill="#222222"/><circle cx="35.9" cy="67.3" r="0.69" fill="#323232"/><circle cx="215.0" cy="275.8" r="0.59" fill="#434343"/><circle cx="232.6" cy="11.3" r="0.58" fill="#3c3c3c"/><circle cx="164.2" cy="23.2" r="0.70" fill="#363636"/><circle cx="278.5" cy="155.9" r="0.70" fill="#2a2a2a"/><circle cx="314.2" cy="197.6" r="0.65" fill="#454545"/><circle cx="277.7" cy="102.4" r="0.50" fill="#303030"/><circle cx="264.3" cy="188.3" r="0.53" fill="#393939"/><circle cx="160.3" cy="51.2" r="0.65" fill="#393939"/><circle cx="357.5" cy="266.6" r="0.56" fill="#303030"/><circle cx="393.9" cy="200.9" r="0.58" fill="#2a2a2a"/><circle cx="3.9" cy="103.2" r="0.59" fill="#3c3c3c"/><circle cx="22.2" cy="77.7" r="0.73" fill="#414141"/><circle cx="350.0" cy="16.0" r="0.63" fill="#2e2e2e"/><circle cx="255.2" cy="140.0" r="0.64" fill="#2d2d2d"/><circle cx="210.0" cy="4.8" r="0.52" fill="#262626"/><circle cx="48.3" cy="194.5" r="0.69" fill="#353535"/><circle cx="334.4" cy="167.7" r="0.69" fill="#252525"/><circle cx="209.3" cy="11.4" r="0.56" fill="#292929"/><circle cx="305.1" cy="113.1" r="0.52" fill="#252525"/><circle cx="409.1" cy="27.8" r="0.56" fill="#3d3d3d"/><circle cx="260.3" cy="182.7" r="0.71" fill="#464646"/><circle cx="178.5" cy="219.4" r="0.72" fill="#242424"/><circle cx="198.4" cy="128.6" r="0.60" fill="#3a3a3a"/><circle cx="59.6" cy="210.3" r="0.62" fill="#2d2d2d"/><circle cx="409.2" cy="156.6" r="0.73" fill="#2e2e2e"/><circle cx="20.8" cy="138.6" r="0.60" fill="#353535"/><circle cx="10.0" cy="123.3" r="0.72" fill="#232323"/><circle cx="251.6" cy="231.2" r="0.71" fill="#252525"/><circle cx="6.6" cy="79.7" r="0.72" fill="#363636"/><circle cx="152.7" cy="121.5" r="0.57" fill="#2a2a2a"/><circle cx="401.2" cy="265.2" r="0.57" fill="#3b3b3b"/><circle cx="386.4" cy="123.7" r="0.62" fill="#303030"/><circle cx="265.6" cy="207.9" r="0.53" fill="#222222"/><circle cx="250.2" cy="16.9" r="0.71" fill="#222222"/><circle cx="180.8" cy="50.8" r="0.65" fill="#3d3d3d"/><circle cx="329.9" cy="71.7" r="0.51" fill="#3e3e3e"/><circle cx="71.7" cy="156.6" r="0.71" fill="#3f3f3f"/><circle cx="244.7" cy="138.4" r="0.55" fill="#3d3d3d"/><circle cx="78.4" cy="11.0" r="0.58" fill="#3b3b3b"/><circle cx="136.9" cy="194.8" r="0.74" fill="#373737"/><circle cx="349.2" cy="81.8" r="0.73" fill="#282828"/><circle cx="130.1" cy="130.1" r="0.69" fill="#383838"/><circle cx="202.8" cy="81.1" r="0.59" fill="#3f3f3f"/><circle cx="24.4" cy="11.2" r="0.69" fill="#3e3e3e"/><circle cx="155.8" cy="217.2" r="0.52" fill="#222222"/><circle cx="39.1" cy="96.8" r="0.63" fill="#373737"/><circle cx="275.9" cy="67.1" r="0.70" fill="#242424"/><circle cx="382.8" cy="202.4" r="0.69" fill="#282828"/><circle cx="13.3" cy="15.4" r="0.74" fill="#333333"/><circle cx="115.2" cy="204.4" r="0.72" fill="#404040"/><circle cx="41.5" cy="242.8" r="0.62" fill="#3d3d3d"/><circle cx="299.4" cy="101.6" r="0.72" fill="#3f3f3f"/><circle cx="283.1" cy="27.6" r="0.70" fill="#272727"/><circle cx="21.8" cy="218.1" r="0.51" fill="#3e3e3e"/><circle cx="77.1" cy="181.9" r="0.55" fill="#2d2d2d"/><circle cx="149.8" cy="65.0" r="0.50" fill="#3a3a3a"/><circle cx="301.8" cy="122.7" r="0.60" fill="#232323"/><circle cx="146.6" cy="116.2" r="0.68" fill="#393939"/><circle cx="202.1" cy="114.4" r="0.50" fill="#2b2b2b"/><circle cx="306.6" cy="204.4" r="0.63" fill="#353535"/><circle cx="414.7" cy="128.3" r="0.73" fill="#434343"/><circle cx="256.6" cy="191.0" r="0.56" fill="#323232"/><circle cx="66.6" cy="146.7" r="0.73" fill="#232323"/><circle cx="391.6" cy="110.0" r="0.53" fill="#262626"/><circle cx="129.6" cy="271.4" r="0.64" fill="#3b3b3b"/><circle cx="254.0" cy="89.5" r="0.53" fill="#2b2b2b"/><circle cx="376.8" cy="67.2" r="0.58" fill="#242424"/><circle cx="380.4" cy="151.6" r="0.71" fill="#373737"/><circle cx="181.7" cy="223.7" r="0.74" fill="#3d3d3d"/><circle cx="161.5" cy="125.0" r="0.73" fill="#383838"/><circle cx="49.8" cy="206.5" r="0.71" fill="#2f2f2f"/><circle cx="277.5" cy="251.0" r="0.67" fill="#2e2e2e"/><circle cx="349.9" cy="102.2" r="0.54" fill="#2f2f2f"/><circle cx="245.1" cy="204.8" r="0.59" fill="#303030"/><circle cx="155.7" cy="173.4" r="0.62" fill="#222222"/><circle cx="412.7" cy="97.5" r="0.61" fill="#313131"/><circle cx="138.3" cy="124.7" r="0.74" fill="#454545"/><circle cx="190.5" cy="6.4" r="0.75" fill="#313131"/><circle cx="5.4" cy="101.2" r="0.58" fill="#2d2d2d"/><circle cx="244.2" cy="239.2" r="0.73" fill="#343434"/><circle cx="72.1" cy="89.0" r="0.68" fill="#2f2f2f"/><circle cx="328.4" cy="44.8" r="0.66" fill="#404040"/><circle cx="245.2" cy="23.2" r="0.52" fill="#282828"/><circle cx="151.6" cy="93.0" r="0.53" fill="#3e3e3e"/><circle cx="151.4" cy="42.3" r="0.65" fill="#3d3d3d"/><circle cx="18.1" cy="139.8" r="0.65" fill="#272727"/><circle cx="340.1" cy="191.9" r="0.67" fill="#363636"/><circle cx="90.3" cy="184.1" r="0.52" fill="#282828"/><circle cx="178.0" cy="146.9" r="0.67" fill="#353535"/><circle cx="21.0" cy="79.0" r="0.56" fill="#272727"/><circle cx="270.4" cy="188.8" r="0.66" fill="#343434"/><circle cx="264.0" cy="23.5" r="0.67" fill="#292929"/><circle cx="18.9" cy="235.9" r="0.51" fill="#2a2a2a"/><circle cx="206.6" cy="132.1" r="0.52" fill="#424242"/><circle cx="150.3" cy="3.7" r="0.58" fill="#2b2b2b"/><circle cx="44.9" cy="76.4" r="0.65" fill="#3a3a3a"/><circle cx="242.2" cy="23.6" r="0.58" fill="#232323"/><circle cx="339.0" cy="188.0" r="0.71" fill="#343434"/><circle cx="45.6" cy="21.3" r="0.69" fill="#404040"/><circle cx="328.4" cy="185.3" r="0.66" fill="#2b2b2b"/><circle cx="17.5" cy="109.1" r="0.71" fill="#3f3f3f"/><circle cx="257.8" cy="273.7" r="0.74" fill="#464646"/><circle cx="180.3" cy="166.7" r="0.73" fill="#242424"/><circle cx="216.5" cy="85.3" r="0.67" fill="#232323"/><circle cx="363.6" cy="137.7" r="0.74" fill="#2a2a2a"/><circle cx="257.6" cy="127.1" r="0.62" fill="#454545"/><circle cx="61.5" cy="32.7" r="0.70" fill="#323232"/><circle cx="86.1" cy="32.6" r="0.66" fill="#3c3c3c"/><circle cx="231.5" cy="197.0" r="0.50" fill="#222222"/><circle cx="52.4" cy="108.5" r="0.59" fill="#333333"/><circle cx="199.0" cy="215.6" r="0.64" fill="#313131"/><circle cx="125.7" cy="234.3" r="0.67" fill="#3a3a3a"/><circle cx="181.9" cy="225.5" r="0.65" fill="#2b2b2b"/><circle cx="284.7" cy="253.9" r="0.63" fill="#252525"/><circle cx="77.6" cy="105.1" r="0.52" fill="#353535"/><circle cx="197.3" cy="77.3" r="0.55" fill="#373737"/><circle cx="98.5" cy="262.4" r="0.55" fill="#2f2f2f"/><circle cx="273.1" cy="248.1" r="0.66" fill="#323232"/><circle cx="324.5" cy="21.7" r="0.64" fill="#464646"/><circle cx="360.6" cy="21.7" r="0.71" fill="#3d3d3d"/><circle cx="232.1" cy="206.9" r="0.73" fill="#282828"/><circle cx="166.8" cy="186.8" r="0.65" fill="#282828"/><circle cx="81.5" cy="227.9" r="0.56" fill="#343434"/><circle cx="131.0" cy="238.8" r="0.64" fill="#363636"/><circle cx="142.0" cy="130.8" r="0.71" fill="#2a2a2a"/><circle cx="399.7" cy="185.6" r="0.56" fill="#373737"/><circle cx="106.5" cy="173.9" r="0.57" fill="#414141"/><circle cx="125.7" cy="14.5" r="0.61" fill="#454545"/><circle cx="271.2" cy="28.2" r="0.51" fill="#2c2c2c"/><circle cx="296.6" cy="45.4" r="0.65" fill="#282828"/><circle cx="308.3" cy="162.7" r="0.64" fill="#222222"/><circle cx="285.5" cy="259.6" r="0.70" fill="#383838"/><circle cx="211.8" cy="22.1" r="0.52" fill="#444444"/><circle cx="116.0" cy="33.4" r="0.53" fill="#414141"/><circle cx="254.8" cy="151.9" r="0.59" fill="#444444"/><circle cx="191.4" cy="178.3" r="0.62" fill="#444444"/><circle cx="260.9" cy="129.4" r="0.75" fill="#222222"/><circle cx="42.5" cy="39.9" r="0.50" fill="#444444"/><circle cx="21.9" cy="33.1" r="0.60" fill="#2b2b2b"/><circle cx="385.6" cy="46.6" r="0.66" fill="#393939"/><circle cx="357.8" cy="148.2" r="0.54" fill="#2d2d2d"/><circle cx="69.2" cy="264.7" r="0.54" fill="#2f2f2f"/><circle cx="25.3" cy="177.2" r="0.62" fill="#404040"/><circle cx="160.3" cy="85.7" r="0.64" fill="#3a3a3a"/><circle cx="225.6" cy="251.1" r="0.52" fill="#3e3e3e"/><circle cx="210.3" cy="97.5" r="0.59" fill="#2a2a2a"/><circle cx="42.9" cy="79.9" r="0.51" fill="#464646"/><circle cx="285.8" cy="154.1" r="0.73" fill="#3e3e3e"/><circle cx="45.2" cy="268.9" r="0.63" fill="#282828"/><circle cx="356.5" cy="142.9" r="0.71" fill="#2c2c2c"/><circle cx="120.0" cy="40.8" r="0.56" fill="#383838"/><circle cx="246.4" cy="195.4" r="0.68" fill="#282828"/><circle cx="78.3" cy="155.5" r="0.69" fill="#3b3b3b"/><circle cx="174.4" cy="47.1" r="0.61" fill="#252525"/><circle cx="271.1" cy="36.5" r="0.57" fill="#3f3f3f"/><circle cx="332.2" cy="172.8" r="0.53" fill="#343434"/><circle cx="298.1" cy="159.2" r="0.68" fill="#252525"/><circle cx="141.8" cy="246.6" r="0.54" fill="#3d3d3d"/><circle cx="129.7" cy="215.2" r="0.70" fill="#3c3c3c"/><circle cx="402.0" cy="79.4" r="0.68" fill="#2f2f2f"/><circle cx="199.4" cy="187.3" r="0.57" fill="#464646"/><circle cx="135.9" cy="190.8" r="0.70" fill="#3f3f3f"/><circle cx="242.8" cy="213.8" r="0.65" fill="#2c2c2c"/><circle cx="178.7" cy="199.3" r="0.53" fill="#282828"/><circle cx="22.5" cy="100.6" r="0.57" fill="#373737"/><circle cx="37.0" cy="133.7" r="0.56" fill="#353535"/><circle cx="103.8" cy="124.8" r="0.64" fill="#252525"/><circle cx="190.2" cy="220.8" r="0.62" fill="#343434"/><circle cx="402.9" cy="192.3" r="0.55" fill="#313131"/><circle cx="377.8" cy="169.1" r="0.65" fill="#262626"/><circle cx="387.8" cy="12.8" r="0.54" fill="#333333"/><circle cx="114.7" cy="192.9" r="0.61" fill="#363636"/><circle cx="28.2" cy="119.4" r="0.71" fill="#363636"/><circle cx="342.9" cy="143.6" r="0.65" fill="#454545"/><circle cx="218.9" cy="222.0" r="0.61" fill="#292929"/><circle cx="384.1" cy="28.2" r="0.74" fill="#404040"/><circle cx="196.9" cy="148.7" r="0.68" fill="#2e2e2e"/><circle cx="121.0" cy="29.4" r="0.64" fill="#434343"/><circle cx="230.4" cy="3.5" r="0.69" fill="#444444"/><circle cx="274.3" cy="182.0" r="0.69" fill="#2d2d2d"/><circle cx="329.9" cy="137.5" r="0.62" fill="#2c2c2c"/><circle cx="371.8" cy="269.8" r="0.72" fill="#242424"/><circle cx="138.6" cy="27.3" r="0.74" fill="#434343"/><circle cx="82.7" cy="180.3" r="0.72" fill="#393939"/><circle cx="2.8" cy="157.6" r="0.60" fill="#404040"/><circle cx="53.5" cy="4.0" r="0.56" fill="#464646"/><circle cx="215.4" cy="93.0" r="0.55" fill="#404040"/><circle cx="271.9" cy="229.5" r="0.66" fill="#232323"/><circle cx="43.8" cy="151.5" r="0.54" fill="#444444"/><circle cx="364.8" cy="185.8" r="0.60" fill="#262626"/><circle cx="201.3" cy="42.7" r="0.67" fill="#232323"/><circle cx="62.9" cy="193.1" r="0.73" fill="#363636"/><circle cx="365.0" cy="90.0" r="0.73" fill="#3c3c3c"/><circle cx="144.1" cy="232.9" r="0.56" fill="#282828"/><circle cx="203.6" cy="272.3" r="0.61" fill="#414141"/><circle cx="19.7" cy="183.4" r="0.68" fill="#444444"/><circle cx="290.5" cy="226.6" r="0.66" fill="#454545"/><circle cx="115.9" cy="57.4" r="0.50" fill="#444444"/><circle cx="25.9" cy="72.3" r="0.70" fill="#444444"/><circle cx="378.7" cy="112.1" r="0.68" fill="#2a2a2a"/><circle cx="308.7" cy="244.3" r="0.64" fill="#3c3c3c"/><circle cx="266.6" cy="98.2" r="0.63" fill="#262626"/><circle cx="52.3" cy="158.9" r="0.65" fill="#353535"/><circle cx="144.3" cy="21.9" r="0.50" fill="#262626"/><circle cx="178.6" cy="28.4" r="0.56" fill="#3f3f3f"/><circle cx="60.4" cy="68.6" r="0.63" fill="#404040"/><circle cx="134.8" cy="225.8" r="0.61" fill="#3d3d3d"/><circle cx="156.6" cy="34.4" r="0.52" fill="#323232"/><circle cx="192.5" cy="90.4" r="0.55" fill="#424242"/><circle cx="49.2" cy="109.6" r="0.74" fill="#262626"/><circle cx="294.1" cy="202.5" r="0.73" fill="#2c2c2c"/><circle cx="65.1" cy="66.0" r="0.66" fill="#3f3f3f"/><circle cx="319.5" cy="150.5" r="0.66" fill="#434343"/><circle cx="171.9" cy="191.8" r="0.53" fill="#333333"/><circle cx="32.0" cy="129.0" r="0.64" fill="#232323"/><circle cx="158.4" cy="73.4" r="0.71" fill="#3e3e3e"/><circle cx="329.3" cy="267.5" r="0.62" fill="#373737"/><circle cx="177.7" cy="79.6" r="0.74" fill="#222222"/><circle cx="64.1" cy="111.6" r="0.55" fill="#464646"/><circle cx="378.4" cy="171.1" r="0.56" fill="#414141"/><circle cx="92.1" cy="207.9" r="0.70" fill="#272727"/><circle cx="200.5" cy="15.5" r="0.61" fill="#3d3d3d"/><circle cx="238.2" cy="226.0" r="0.72" fill="#303030"/><circle cx="283.2" cy="146.5" r="0.71" fill="#444444"/><circle cx="268.7" cy="90.3" r="0.71" fill="#3e3e3e"/><circle cx="222.1" cy="19.7" r="0.72" fill="#3b3b3b"/><circle cx="325.5" cy="88.3" r="0.72" fill="#262626"/><circle cx="30.2" cy="200.9" r="0.60" fill="#292929"/><circle cx="157.6" cy="263.1" r="0.50" fill="#404040"/><circle cx="233.5" cy="109.3" r="0.53" fill="#3f3f3f"/><circle cx="262.6" cy="49.6" r="0.63" fill="#3a3a3a"/><circle cx="160.5" cy="32.3" r="0.71" fill="#232323"/><circle cx="250.1" cy="122.8" r="0.69" fill="#424242"/><circle cx="346.9" cy="266.2" r="0.65" fill="#363636"/><circle cx="2.9" cy="16.0" r="0.57" fill="#363636"/><circle cx="22.7" cy="128.3" r="0.60" fill="#414141"/><circle cx="384.1" cy="252.2" r="0.73" fill="#464646"/><circle cx="97.1" cy="182.3" r="0.55" fill="#444444"/><circle cx="220.3" cy="129.5" r="0.62" fill="#2c2c2c"/><circle cx="364.9" cy="64.8" r="0.66" fill="#3c3c3c"/><circle cx="279.8" cy="151.8" r="0.54" fill="#232323"/><circle cx="121.0" cy="102.7" r="0.75" fill="#252525"/><circle cx="374.4" cy="96.0" r="0.53" fill="#3d3d3d"/><circle cx="305.2" cy="71.2" r="0.55" fill="#333333"/><circle cx="62.1" cy="134.1" r="0.65" fill="#3c3c3c"/><circle cx="149.8" cy="26.1" r="0.66" fill="#313131"/><circle cx="120.3" cy="74.1" r="0.62" fill="#2c2c2c"/><circle cx="304.5" cy="128.8" r="0.62" fill="#383838"/><circle cx="252.9" cy="275.1" r="0.51" fill="#262626"/><circle cx="267.7" cy="61.5" r="0.57" fill="#3a3a3a"/><circle cx="311.5" cy="71.1" r="0.63" fill="#3d3d3d"/><circle cx="84.4" cy="272.0" r="0.68" fill="#464646"/><circle cx="234.3" cy="245.7" r="0.55" fill="#3f3f3f"/><circle cx="32.2" cy="131.1" r="0.70" fill="#434343"/><circle cx="264.8" cy="228.8" r="0.66" fill="#323232"/><circle cx="3.8" cy="58.3" r="0.72" fill="#313131"/><circle cx="219.1" cy="110.8" r="0.51" fill="#393939"/><circle cx="140.5" cy="42.5" r="0.66" fill="#242424"/><circle cx="257.8" cy="93.4" r="0.73" fill="#2b2b2b"/><circle cx="141.1" cy="123.0" r="0.69" fill="#2f2f2f"/><circle cx="100.9" cy="204.9" r="0.58" fill="#3c3c3c"/><circle cx="19.9" cy="99.5" r="0.58" fill="#2b2b2b"/><circle cx="390.2" cy="129.8" r="0.54" fill="#373737"/><circle cx="219.7" cy="194.3" r="0.56" fill="#2f2f2f"/><circle cx="203.6" cy="96.5" r="0.72" fill="#313131"/><circle cx="86.5" cy="58.6" r="0.54" fill="#383838"/><circle cx="348.8" cy="125.9" r="0.52" fill="#2e2e2e"/><circle cx="185.6" cy="42.8" r="0.67" fill="#383838"/><circle cx="271.2" cy="111.0" r="0.60" fill="#323232"/><circle cx="265.7" cy="247.5" r="0.55" fill="#353535"/><circle cx="171.3" cy="90.8" r="0.55" fill="#3b3b3b"/><circle cx="378.6" cy="261.5" r="0.65" fill="#3b3b3b"/><circle cx="202.4" cy="266.5" r="0.55" fill="#404040"/><circle cx="15.3" cy="227.5" r="0.52" fill="#2f2f2f"/><circle cx="152.5" cy="227.5" r="0.65" fill="#424242"/><circle cx="341.7" cy="204.2" r="0.73" fill="#282828"/><circle cx="91.0" cy="87.1" r="0.56" fill="#272727"/><circle cx="94.5" cy="61.4" r="0.71" fill="#282828"/><circle cx="195.7" cy="265.0" r="0.68" fill="#414141"/><circle cx="322.5" cy="50.6" r="0.73" fill="#313131"/><circle cx="390.6" cy="236.6" r="0.54" fill="#3a3a3a"/><circle cx="257.2" cy="200.9" r="0.74" fill="#343434"/><circle cx="113.6" cy="231.0" r="0.56" fill="#2c2c2c"/><circle cx="352.4" cy="197.7" r="0.71" fill="#2f2f2f"/><circle cx="7.2" cy="65.8" r="0.53" fill="#232323"/><circle cx="216.8" cy="189.2" r="0.56" fill="#393939"/><circle cx="142.2" cy="56.4" r="0.55" fill="#282828"/><circle cx="223.0" cy="79.2" r="0.75" fill="#3a3a3a"/><circle cx="178.7" cy="250.6" r="0.61" fill="#3d3d3d"/><circle cx="403.2" cy="224.6" r="0.51" fill="#3e3e3e"/><circle cx="211.0" cy="236.9" r="0.75" fill="#404040"/><circle cx="210.7" cy="227.4" r="0.69" fill="#2a2a2a"/><circle cx="406.8" cy="60.6" r="0.55" fill="#444444"/><circle cx="74.3" cy="169.3" r="0.57" fill="#363636"/><circle cx="193.1" cy="100.9" r="0.65" fill="#2e2e2e"/><circle cx="247.0" cy="60.2" r="0.51" fill="#454545"/><circle cx="155.8" cy="274.4" r="0.70" fill="#383838"/><circle cx="364.0" cy="6.1" r="0.71" fill="#393939"/><circle cx="334.3" cy="177.4" r="0.63" fill="#232323"/><circle cx="163.3" cy="119.1" r="0.71" fill="#333333"/><circle cx="62.2" cy="194.6" r="0.71" fill="#292929"/><circle cx="401.9" cy="97.2" r="0.71" fill="#282828"/><circle cx="180.0" cy="46.5" r="0.63" fill="#3d3d3d"/><circle cx="108.6" cy="190.1" r="0.67" fill="#2c2c2c"/><circle cx="221.7" cy="68.0" r="0.64" fill="#444444"/><circle cx="380.9" cy="128.2" r="0.66" fill="#454545"/><circle cx="20.0" cy="236.3" r="0.71" fill="#3d3d3d"/><circle cx="402.5" cy="166.9" r="0.53" fill="#272727"/><circle cx="319.1" cy="170.4" r="0.56" fill="#252525"/><circle cx="363.4" cy="253.6" r="0.74" fill="#2d2d2d"/><circle cx="146.0" cy="49.1" r="0.51" fill="#444444"/><circle cx="98.0" cy="26.6" r="0.66" fill="#393939"/><circle cx="282.6" cy="211.8" r="0.58" fill="#454545"/><circle cx="222.4" cy="3.2" r="0.72" fill="#303030"/><circle cx="15.9" cy="261.8" r="0.62" fill="#353535"/><circle cx="322.9" cy="162.5" r="0.60" fill="#242424"/><circle cx="96.2" cy="22.3" r="0.67" fill="#343434"/><circle cx="347.1" cy="234.1" r="0.73" fill="#2a2a2a"/><circle cx="396.6" cy="221.7" r="0.68" fill="#434343"/><circle cx="42.5" cy="26.0" r="0.73" fill="#383838"/><circle cx="6.2" cy="144.5" r="0.74" fill="#282828"/><circle cx="58.2" cy="216.2" r="0.61" fill="#434343"/><circle cx="116.8" cy="236.3" r="0.70" fill="#383838"/><circle cx="49.0" cy="241.2" r="0.73" fill="#2a2a2a"/><circle cx="305.9" cy="119.9" r="0.58" fill="#363636"/><circle cx="258.1" cy="138.8" r="0.71" fill="#343434"/><circle cx="92.9" cy="141.0" r="0.58" fill="#343434"/><circle cx="365.4" cy="61.8" r="0.53" fill="#2e2e2e"/><circle cx="287.9" cy="64.2" r="0.74" fill="#242424"/><circle cx="56.7" cy="245.9" r="0.54" fill="#292929"/><circle cx="59.0" cy="103.2" r="0.72" fill="#343434"/><circle cx="302.5" cy="119.9" r="0.62" fill="#3c3c3c"/><circle cx="128.4" cy="36.6" r="0.56" fill="#393939"/><circle cx="10.4" cy="85.6" r="0.59" fill="#2f2f2f"/><circle cx="288.5" cy="197.4" r="0.63" fill="#444444"/><circle cx="143.3" cy="231.2" r="0.63" fill="#434343"/><circle cx="289.7" cy="90.3" r="0.58" fill="#454545"/><circle cx="274.6" cy="36.3" r="0.54" fill="#404040"/><circle cx="59.1" cy="194.6" r="0.64" fill="#373737"/><circle cx="246.8" cy="72.5" r="0.59" fill="#353535"/><circle cx="26.1" cy="17.6" r="0.55" fill="#454545"/><circle cx="192.1" cy="9.2" r="0.59" fill="#2b2b2b"/><circle cx="136.4" cy="274.9" r="0.71" fill="#444444"/><circle cx="71.6" cy="111.9" r="0.70" fill="#3e3e3e"/><circle cx="201.8" cy="193.5" r="0.69" fill="#313131"/><circle cx="217.4" cy="69.0" r="0.53" fill="#262626"/><circle cx="103.3" cy="176.0" r="0.62" fill="#2f2f2f"/><circle cx="73.8" cy="40.3" r="0.59" fill="#252525"/><circle cx="385.8" cy="21.5" r="0.56" fill="#282828"/><circle cx="42.4" cy="96.7" r="0.68" fill="#373737"/><circle cx="295.6" cy="12.2" r="0.73" fill="#464646"/><circle cx="330.6" cy="171.3" r="0.53" fill="#232323"/><circle cx="307.8" cy="268.3" r="0.63" fill="#333333"/><circle cx="2.6" cy="159.7" r="0.58" fill="#292929"/><circle cx="346.9" cy="158.3" r="0.50" fill="#424242"/><circle cx="224.7" cy="133.3" r="0.64" fill="#2d2d2d"/><circle cx="225.4" cy="16.8" r="0.58" fill="#292929"/><circle cx="126.6" cy="269.3" r="0.65" fill="#262626"/><circle cx="194.8" cy="263.5" r="0.65" fill="#313131"/><circle cx="12.8" cy="40.4" r="0.51" fill="#3c3c3c"/><circle cx="321.6" cy="114.9" r="0.54" fill="#3c3c3c"/><circle cx="77.8" cy="32.4" r="0.50" fill="#262626"/><circle cx="68.1" cy="152.5" r="0.57" fill="#2a2a2a"/><circle cx="131.2" cy="101.6" r="0.60" fill="#383838"/><circle cx="311.1" cy="39.4" r="0.53" fill="#363636"/><circle cx="112.6" cy="65.0" r="0.71" fill="#2e2e2e"/><circle cx="99.6" cy="143.6" r="0.53" fill="#232323"/><circle cx="117.3" cy="248.2" r="0.61" fill="#2a2a2a"/><circle cx="43.3" cy="93.2" r="0.64" fill="#363636"/><circle cx="170.3" cy="217.3" r="0.73" fill="#292929"/><circle cx="226.4" cy="31.9" r="0.68" fill="#404040"/><circle cx="315.1" cy="55.3" r="0.54" fill="#3b3b3b"/><circle cx="205.8" cy="262.9" r="0.52" fill="#272727"/><circle cx="356.3" cy="226.5" r="0.54" fill="#323232"/><circle cx="199.3" cy="15.5" r="0.58" fill="#373737"/><circle cx="407.4" cy="264.1" r="0.60" fill="#434343"/><circle cx="401.7" cy="95.2" r="0.65" fill="#363636"/><circle cx="363.5" cy="16.7" r="0.65" fill="#262626"/><circle cx="71.9" cy="62.9" r="0.73" fill="#424242"/><circle cx="105.8" cy="7.7" r="0.70" fill="#2f2f2f"/><circle cx="309.9" cy="236.4" r="0.59" fill="#2c2c2c"/><circle cx="36.3" cy="111.5" r="0.73" fill="#323232"/><circle cx="173.2" cy="111.3" r="0.70" fill="#424242"/><circle cx="11.1" cy="47.8" r="0.57" fill="#3e3e3e"/><circle cx="65.9" cy="161.6" r="0.50" fill="#373737"/><circle cx="221.9" cy="73.3" r="0.63" fill="#373737"/><circle cx="327.0" cy="103.7" r="0.64" fill="#282828"/><circle cx="404.1" cy="181.3" r="0.58" fill="#404040"/><circle cx="290.3" cy="73.9" r="0.73" fill="#404040"/><circle cx="95.7" cy="114.8" r="0.67" fill="#454545"/><circle cx="340.6" cy="203.3" r="0.67" fill="#232323"/><circle cx="290.4" cy="47.0" r="0.60" fill="#434343"/><circle cx="303.4" cy="177.0" r="0.58" fill="#424242"/><circle cx="300.0" cy="236.6" r="0.69" fill="#303030"/><circle cx="85.8" cy="269.1" r="0.68" fill="#464646"/><circle cx="335.8" cy="217.7" r="0.59" fill="#3b3b3b"/><circle cx="92.5" cy="208.0" r="0.73" fill="#262626"/><circle cx="296.5" cy="178.8" r="0.72" fill="#232323"/><circle cx="149.5" cy="26.2" r="0.75" fill="#434343"/><circle cx="44.6" cy="132.8" r="0.72" fill="#393939"/><circle cx="173.5" cy="248.9" r="0.61" fill="#3c3c3c"/><circle cx="65.6" cy="178.9" r="0.71" fill="#252525"/><circle cx="202.4" cy="220.9" r="0.57" fill="#2e2e2e"/><circle cx="97.4" cy="75.2" r="0.75" fill="#3b3b3b"/><circle cx="132.9" cy="86.7" r="0.53" fill="#404040"/><circle cx="230.0" cy="261.9" r="0.62" fill="#363636"/><circle cx="118.5" cy="184.5" r="0.52" fill="#3f3f3f"/><circle cx="149.4" cy="272.5" r="0.64" fill="#2b2b2b"/><circle cx="34.1" cy="243.7" r="0.50" fill="#414141"/><circle cx="267.2" cy="234.9" r="0.67" fill="#333333"/><circle cx="357.2" cy="121.8" r="0.65" fill="#3b3b3b"/><circle cx="167.7" cy="93.5" r="0.71" fill="#434343"/><circle cx="372.5" cy="242.5" r="0.66" fill="#3d3d3d"/><circle cx="393.2" cy="36.7" r="0.55" fill="#454545"/><circle cx="337.2" cy="228.0" r="0.67" fill="#3a3a3a"/><circle cx="51.2" cy="208.9" r="0.62" fill="#2c2c2c"/><circle cx="315.6" cy="145.2" r="0.55" fill="#3c3c3c"/><circle cx="402.4" cy="124.1" r="0.68" fill="#363636"/><circle cx="373.8" cy="274.9" r="0.53" fill="#2f2f2f"/><circle cx="89.3" cy="70.7" r="0.72" fill="#222222"/><circle cx="112.8" cy="112.9" r="0.51" fill="#343434"/><circle cx="228.2" cy="135.9" r="0.54" fill="#2e2e2e"/><circle cx="289.1" cy="146.7" r="0.55" fill="#282828"/><circle cx="403.3" cy="109.4" r="0.50" fill="#414141"/><circle cx="135.2" cy="191.9" r="0.75" fill="#2f2f2f"/><circle cx="314.9" cy="15.4" r="0.51" fill="#3a3a3a"/><circle cx="97.7" cy="68.3" r="0.67" fill="#424242"/><circle cx="234.4" cy="47.2" r="0.74" fill="#303030"/><circle cx="263.2" cy="150.4" r="0.70" fill="#252525"/><circle cx="296.2" cy="210.5" r="0.54" fill="#3b3b3b"/><circle cx="21.0" cy="207.8" r="0.53" fill="#323232"/><circle cx="224.6" cy="193.6" r="0.55" fill="#454545"/><circle cx="132.5" cy="106.9" r="0.72" fill="#292929"/><circle cx="360.2" cy="47.6" r="0.66" fill="#2b2b2b"/><circle cx="94.5" cy="109.1" r="0.52" fill="#434343"/><circle cx="211.5" cy="176.7" r="0.60" fill="#242424"/><circle cx="133.0" cy="150.2" r="0.62" fill="#313131"/><circle cx="389.2" cy="32.6" r="0.53" fill="#3f3f3f"/><circle cx="165.6" cy="116.3" r="0.52" fill="#3f3f3f"/><circle cx="119.6" cy="169.1" r="0.52" fill="#373737"/><circle cx="255.5" cy="241.8" r="0.63" fill="#454545"/><circle cx="83.1" cy="84.5" r="0.57" fill="#363636"/><circle cx="207.3" cy="53.3" r="0.53" fill="#464646"/><circle cx="288.4" cy="135.4" r="0.51" fill="#464646"/><circle cx="319.9" cy="247.2" r="0.64" fill="#343434"/><circle cx="245.2" cy="265.0" r="0.55" fill="#232323"/><circle cx="391.5" cy="263.5" r="0.56" fill="#2a2a2a"/><circle cx="414.5" cy="214.5" r="0.73" fill="#2c2c2c"/><circle cx="169.6" cy="69.0" r="0.72" fill="#313131"/><circle cx="59.1" cy="78.2" r="0.50" fill="#454545"/><circle cx="382.8" cy="57.1" r="0.71" fill="#252525"/><circle cx="372.3" cy="26.5" r="0.59" fill="#373737"/><circle cx="259.2" cy="269.8" r="0.59" fill="#3c3c3c"/><circle cx="282.3" cy="218.3" r="0.74" fill="#2b2b2b"/><circle cx="200.7" cy="179.1" r="0.67" fill="#393939"/><circle cx="412.3" cy="151.5" r="0.67" fill="#404040"/><circle cx="302.0" cy="138.8" r="0.64" fill="#434343"/><circle cx="319.6" cy="72.9" r="0.73" fill="#2e2e2e"/><circle cx="72.5" cy="125.8" r="0.58" fill="#2f2f2f"/><circle cx="40.6" cy="106.8" r="0.50" fill="#464646"/><circle cx="95.6" cy="31.7" r="0.67" fill="#3c3c3c"/><circle cx="320.7" cy="77.7" r="0.69" fill="#262626"/><circle cx="129.3" cy="274.2" r="0.55" fill="#2f2f2f"/><circle cx="290.6" cy="33.8" r="0.67" fill="#404040"/><circle cx="224.3" cy="12.1" r="0.57" fill="#282828"/><circle cx="389.4" cy="2.2" r="0.70" fill="#404040"/><circle cx="391.8" cy="68.3" r="0.66" fill="#3e3e3e"/><circle cx="334.8" cy="46.3" r="0.55" fill="#222222"/><circle cx="411.4" cy="237.9" r="0.73" fill="#404040"/><circle cx="408.6" cy="12.2" r="0.59" fill="#242424"/><circle cx="285.6" cy="91.7" r="0.62" fill="#434343"/><circle cx="325.3" cy="39.5" r="0.68" fill="#424242"/><circle cx="12.4" cy="119.5" r="0.63" fill="#333333"/><circle cx="220.7" cy="45.4" r="0.64" fill="#3a3a3a"/><circle cx="99.1" cy="119.5" r="0.56" fill="#3f3f3f"/><circle cx="380.3" cy="191.8" r="0.74" fill="#343434"/><circle cx="209.7" cy="45.6" r="0.61" fill="#282828"/><circle cx="277.7" cy="79.2" r="0.69" fill="#404040"/><circle cx="99.3" cy="234.3" r="0.57" fill="#414141"/><circle cx="218.8" cy="263.6" r="0.70" fill="#2c2c2c"/><circle cx="154.6" cy="54.4" r="0.71" fill="#363636"/><circle cx="226.7" cy="33.5" r="0.57" fill="#2d2d2d"/><circle cx="361.3" cy="104.3" r="0.66" fill="#313131"/><circle cx="116.3" cy="175.3" r="0.53" fill="#454545"/><circle cx="253.0" cy="101.9" r="0.68" fill="#444444"/><circle cx="276.7" cy="70.5" r="0.62" fill="#424242"/><circle cx="26.1" cy="189.6" r="0.60" fill="#2c2c2c"/><circle cx="332.3" cy="83.5" r="0.64" fill="#404040"/><circle cx="404.8" cy="17.3" r="0.72" fill="#272727"/><circle cx="26.2" cy="54.2" r="0.63" fill="#313131"/><circle cx="210.9" cy="49.3" r="0.61" fill="#434343"/><circle cx="89.6" cy="263.4" r="0.69" fill="#3b3b3b"/><circle cx="196.1" cy="256.6" r="0.71" fill="#454545"/><circle cx="220.9" cy="113.1" r="0.73" fill="#2e2e2e"/><circle cx="18.4" cy="144.7" r="0.70" fill="#373737"/><circle cx="141.2" cy="38.1" r="0.53" fill="#282828"/><circle cx="63.0" cy="122.1" r="0.72" fill="#2a2a2a"/><circle cx="271.1" cy="98.1" r="0.62" fill="#3f3f3f"/><circle cx="164.4" cy="133.2" r="0.54" fill="#333333"/><circle cx="184.1" cy="94.7" r="0.54" fill="#3c3c3c"/><circle cx="19.6" cy="182.9" r="0.66" fill="#222222"/><circle cx="358.3" cy="53.4" r="0.64" fill="#464646"/><circle cx="106.6" cy="136.2" r="0.62" fill="#2e2e2e"/><circle cx="279.0" cy="248.6" r="0.50" fill="#2c2c2c"/><circle cx="357.5" cy="29.7" r="0.54" fill="#222222"/><circle cx="225.8" cy="106.1" r="0.69" fill="#3c3c3c"/><circle cx="286.9" cy="44.8" r="0.61" fill="#434343"/><circle cx="402.7" cy="24.9" r="0.62" fill="#282828"/><circle cx="275.6" cy="126.3" r="0.56" fill="#353535"/><circle cx="257.0" cy="154.3" r="0.69" fill="#292929"/><circle cx="206.5" cy="10.9" r="0.62" fill="#2d2d2d"/><circle cx="368.7" cy="105.0" r="0.51" fill="#272727"/><circle cx="281.5" cy="131.9" r="0.61" fill="#3a3a3a"/><circle cx="228.4" cy="202.5" r="0.58" fill="#333333"/><circle cx="141.6" cy="54.1" r="0.73" fill="#383838"/><circle cx="283.9" cy="18.3" r="0.66" fill="#2b2b2b"/><circle cx="24.1" cy="192.9" r="0.56" fill="#353535"/><circle cx="170.3" cy="257.9" r="0.60" fill="#383838"/><circle cx="5.8" cy="222.9" r="0.56" fill="#343434"/><circle cx="311.4" cy="183.2" r="0.70" fill="#404040"/><circle cx="363.8" cy="206.8" r="0.67" fill="#222222"/><circle cx="230.0" cy="275.1" r="0.53" fill="#393939"/><circle cx="321.4" cy="195.4" r="0.71" fill="#222222"/><circle cx="8.1" cy="152.0" r="0.63" fill="#3d3d3d"/><circle cx="285.4" cy="112.4" r="0.70" fill="#444444"/><circle cx="116.3" cy="182.4" r="0.57" fill="#323232"/><circle cx="233.5" cy="168.6" r="0.51" fill="#2e2e2e"/><circle cx="33.2" cy="119.0" r="0.65" fill="#363636"/><circle cx="233.4" cy="176.6" r="0.65" fill="#353535"/><circle cx="186.9" cy="223.0" r="0.52" fill="#454545"/><circle cx="207.8" cy="24.1" r="0.69" fill="#232323"/><circle cx="181.2" cy="138.6" r="0.60" fill="#464646"/><circle cx="254.8" cy="173.7" r="0.62" fill="#222222"/><circle cx="8.6" cy="101.6" r="0.64" fill="#383838"/><circle cx="177.7" cy="152.5" r="0.56" fill="#434343"/><circle cx="239.4" cy="215.9" r="0.53" fill="#3f3f3f"/><circle cx="249.3" cy="154.0" r="0.64" fill="#353535"/><circle cx="182.7" cy="224.4" r="0.64" fill="#313131"/><circle cx="384.8" cy="165.9" r="0.52" fill="#3b3b3b"/><circle cx="98.0" cy="46.6" r="0.63" fill="#323232"/><circle cx="206.0" cy="233.1" r="0.73" fill="#292929"/><circle cx="86.1" cy="184.9" r="0.63" fill="#323232"/><circle cx="101.6" cy="53.4" r="0.70" fill="#242424"/><circle cx="354.5" cy="35.2" r="0.55" fill="#353535"/><circle cx="394.9" cy="63.3" r="0.53" fill="#3d3d3d"/><circle cx="299.0" cy="268.1" r="0.71" fill="#424242"/><circle cx="215.3" cy="237.9" r="0.61" fill="#2b2b2b"/><circle cx="167.6" cy="80.7" r="0.69" fill="#363636"/><circle cx="121.2" cy="129.6" r="0.53" fill="#3e3e3e"/><circle cx="371.0" cy="109.7" r="0.71" fill="#3d3d3d"/><circle cx="82.3" cy="90.5" r="0.60" fill="#222222"/><circle cx="229.5" cy="162.6" r="0.73" fill="#252525"/><circle cx="9.1" cy="266.0" r="0.51" fill="#3e3e3e"/><circle cx="281.6" cy="138.3" r="0.74" fill="#434343"/><circle cx="179.3" cy="84.6" r="0.68" fill="#2b2b2b"/><circle cx="81.0" cy="50.7" r="0.61" fill="#464646"/><circle cx="394.5" cy="93.2" r="0.59" fill="#373737"/><circle cx="150.9" cy="146.0" r="0.65" fill="#2c2c2c"/><circle cx="299.8" cy="47.3" r="0.58" fill="#404040"/><circle cx="126.6" cy="173.1" r="0.66" fill="#2d2d2d"/><circle cx="36.3" cy="262.2" r="0.56" fill="#323232"/><circle cx="83.8" cy="183.1" r="0.70" fill="#404040"/><circle cx="53.1" cy="62.2" r="0.53" fill="#2b2b2b"/><circle cx="53.8" cy="250.7" r="0.71" fill="#323232"/><circle cx="355.9" cy="272.6" r="0.58" fill="#353535"/><circle cx="269.0" cy="51.4" r="0.70" fill="#292929"/><circle cx="400.9" cy="90.1" r="0.51" fill="#454545"/><circle cx="250.5" cy="74.4" r="0.70" fill="#3a3a3a"/><circle cx="234.4" cy="107.8" r="0.66" fill="#303030"/><circle cx="373.3" cy="107.3" r="0.65" fill="#2c2c2c"/><circle cx="42.4" cy="137.0" r="0.70" fill="#393939"/><circle cx="147.2" cy="135.3" r="0.56" fill="#434343"/><circle cx="309.0" cy="230.1" r="0.54" fill="#2b2b2b"/><circle cx="356.5" cy="245.0" r="0.75" fill="#303030"/><circle cx="130.0" cy="63.0" r="0.73" fill="#373737"/><circle cx="35.5" cy="149.4" r="0.59" fill="#2d2d2d"/><circle cx="196.7" cy="254.0" r="0.74" fill="#282828"/><circle cx="312.3" cy="20.8" r="0.62" fill="#3c3c3c"/><circle cx="41.4" cy="113.5" r="0.66" fill="#282828"/><circle cx="30.6" cy="46.6" r="0.67" fill="#3f3f3f"/><circle cx="339.0" cy="165.3" r="0.67" fill="#3c3c3c"/><circle cx="292.6" cy="88.9" r="0.64" fill="#3f3f3f"/><circle cx="11.9" cy="153.0" r="0.53" fill="#383838"/><circle cx="324.1" cy="45.1" r="0.65" fill="#333333"/><circle cx="394.2" cy="204.1" r="0.55" fill="#222222"/><circle cx="60.8" cy="160.1" r="0.63" fill="#373737"/><circle cx="206.8" cy="225.3" r="0.75" fill="#303030"/><circle cx="204.3" cy="51.7" r="0.64" fill="#464646"/><circle cx="70.2" cy="91.3" r="0.51" fill="#333333"/><circle cx="129.5" cy="252.5" r="0.68" fill="#262626"/><circle cx="204.2" cy="190.4" r="0.50" fill="#2f2f2f"/><circle cx="50.4" cy="53.3" r="0.74" fill="#2a2a2a"/><circle cx="62.5" cy="225.5" r="0.65" fill="#424242"/><circle cx="232.8" cy="188.4" r="0.61" fill="#282828"/><circle cx="22.9" cy="10.8" r="0.50" fill="#323232"/><circle cx="190.4" cy="74.7" r="0.54" fill="#2a2a2a"/><circle cx="303.1" cy="41.9" r="0.60" fill="#343434"/><circle cx="58.7" cy="153.0" r="0.70" fill="#2b2b2b"/><circle cx="173.4" cy="221.9" r="0.57" fill="#323232"/><circle cx="23.4" cy="255.2" r="0.72" fill="#2e2e2e"/><circle cx="158.4" cy="260.4" r="0.67" fill="#464646"/><circle cx="220.9" cy="102.0" r="0.54" fill="#3b3b3b"/><circle cx="289.0" cy="126.9" r="0.53" fill="#222222"/><circle cx="50.0" cy="47.1" r="0.62" fill="#454545"/><circle cx="128.7" cy="207.6" r="0.70" fill="#444444"/><circle cx="408.3" cy="226.6" r="0.56" fill="#2f2f2f"/><circle cx="128.6" cy="235.3" r="0.70" fill="#454545"/><circle cx="155.9" cy="259.3" r="0.66" fill="#2a2a2a"/><circle cx="42.3" cy="19.6" r="0.54" fill="#393939"/><circle cx="390.0" cy="239.7" r="0.51" fill="#404040"/><circle cx="18.9" cy="163.6" r="0.66" fill="#2d2d2d"/><circle cx="137.4" cy="30.3" r="0.62" fill="#2e2e2e"/><circle cx="275.9" cy="199.4" r="0.62" fill="#292929"/><circle cx="203.7" cy="229.9" r="0.62" fill="#272727"/><circle cx="184.7" cy="230.6" r="0.62" fill="#404040"/><circle cx="404.7" cy="40.5" r="0.72" fill="#333333"/><circle cx="41.0" cy="176.6" r="0.72" fill="#303030"/><circle cx="125.6" cy="29.8" r="0.65" fill="#3e3e3e"/><circle cx="92.3" cy="82.7" r="0.60" fill="#2d2d2d"/><circle cx="325.5" cy="49.4" r="0.69" fill="#404040"/><circle cx="190.5" cy="103.8" r="0.72" fill="#2c2c2c"/><circle cx="279.9" cy="46.2" r="0.68" fill="#404040"/><circle cx="337.5" cy="259.5" r="0.70" fill="#424242"/><circle cx="356.4" cy="209.1" r="0.54" fill="#434343"/><circle cx="2.4" cy="73.2" r="0.51" fill="#464646"/><circle cx="18.4" cy="149.4" r="0.72" fill="#3d3d3d"/><circle cx="272.6" cy="230.1" r="0.69" fill="#3c3c3c"/><circle cx="72.6" cy="238.1" r="0.61" fill="#3f3f3f"/><circle cx="323.1" cy="56.0" r="0.59" fill="#424242"/><circle cx="241.1" cy="193.6" r="0.67" fill="#3c3c3c"/><circle cx="410.1" cy="215.4" r="0.65" fill="#252525"/><circle cx="70.8" cy="45.0" r="0.52" fill="#363636"/><circle cx="171.5" cy="100.8" r="0.56" fill="#2d2d2d"/><circle cx="147.7" cy="233.7" r="0.62" fill="#2a2a2a"/><circle cx="353.9" cy="202.4" r="0.54" fill="#2f2f2f"/><circle cx="402.1" cy="80.2" r="0.57" fill="#3e3e3e"/><circle cx="320.9" cy="208.2" r="0.59" fill="#2f2f2f"/><circle cx="395.1" cy="144.0" r="0.66" fill="#3a3a3a"/><circle cx="64.4" cy="169.4" r="0.52" fill="#464646"/><circle cx="261.9" cy="253.6" r="0.65" fill="#454545"/><circle cx="164.9" cy="194.7" r="0.61" fill="#3a3a3a"/><circle cx="2.8" cy="125.0" r="0.62" fill="#333333"/><circle cx="83.0" cy="236.5" r="0.66" fill="#434343"/><circle cx="262.1" cy="66.2" r="0.61" fill="#454545"/><circle cx="272.3" cy="83.0" r="0.65" fill="#262626"/><circle cx="385.0" cy="198.1" r="0.75" fill="#3f3f3f"/><circle cx="289.1" cy="96.8" r="0.53" fill="#292929"/><circle cx="289.7" cy="74.5" r="0.51" fill="#373737"/><circle cx="161.2" cy="173.6" r="0.53" fill="#3d3d3d"/><circle cx="359.2" cy="95.0" r="0.66" fill="#2e2e2e"/><circle cx="20.4" cy="216.4" r="0.65" fill="#262626"/><circle cx="171.3" cy="88.4" r="0.66" fill="#222222"/><circle cx="332.4" cy="130.1" r="0.52" fill="#404040"/><circle cx="262.3" cy="75.9" r="0.71" fill="#2c2c2c"/><circle cx="275.1" cy="92.6" r="0.61" fill="#414141"/><circle cx="176.3" cy="99.8" r="0.70" fill="#2e2e2e"/><circle cx="35.2" cy="175.1" r="0.55" fill="#383838"/><circle cx="251.8" cy="202.9" r="0.72" fill="#3e3e3e"/><circle cx="329.6" cy="180.6" r="0.52" fill="#3f3f3f"/><circle cx="19.8" cy="196.5" r="0.66" fill="#353535"/><circle cx="408.8" cy="145.4" r="0.61" fill="#464646"/><circle cx="107.7" cy="139.8" r="0.50" fill="#222222"/><circle cx="121.8" cy="235.7" r="0.75" fill="#343434"/><circle cx="335.5" cy="114.7" r="0.67" fill="#434343"/><circle cx="221.0" cy="255.9" r="0.67" fill="#232323"/><circle cx="161.1" cy="134.4" r="0.72" fill="#404040"/><circle cx="287.4" cy="39.6" r="0.67" fill="#323232"/><circle cx="31.4" cy="201.0" r="0.51" fill="#252525"/><circle cx="60.9" cy="137.2" r="0.60" fill="#434343"/><circle cx="141.6" cy="163.6" r="0.71" fill="#363636"/><circle cx="288.6" cy="224.0" r="0.52" fill="#2a2a2a"/><circle cx="27.3" cy="134.8" r="0.65" fill="#2d2d2d"/><circle cx="91.1" cy="211.2" r="0.58" fill="#454545"/><circle cx="220.7" cy="225.8" r="0.60" fill="#262626"/><circle cx="73.9" cy="25.6" r="0.72" fill="#252525"/><circle cx="163.7" cy="260.2" r="0.50" fill="#222222"/><circle cx="66.7" cy="265.5" r="0.54" fill="#2a2a2a"/><circle cx="24.3" cy="155.0" r="0.57" fill="#454545"/><circle cx="368.0" cy="181.9" r="0.69" fill="#242424"/><circle cx="286.7" cy="16.9" r="0.68" fill="#292929"/><circle cx="143.1" cy="31.3" r="0.74" fill="#2e2e2e"/><circle cx="381.4" cy="6.2" r="0.52" fill="#404040"/><circle cx="325.7" cy="68.8" r="0.51" fill="#262626"/><circle cx="340.2" cy="244.9" r="0.72" fill="#3e3e3e"/><circle cx="368.5" cy="232.3" r="0.50" fill="#292929"/><circle cx="132.4" cy="182.3" r="0.68" fill="#2b2b2b"/><circle cx="223.4" cy="98.3" r="0.54" fill="#323232"/><circle cx="328.4" cy="151.8" r="0.54" fill="#333333"/><circle cx="151.7" cy="159.2" r="0.56" fill="#323232"/><circle cx="48.2" cy="246.1" r="0.65" fill="#262626"/><circle cx="109.8" cy="248.6" r="0.73" fill="#303030"/><circle cx="101.8" cy="26.9" r="0.60" fill="#323232"/><circle cx="111.1" cy="263.9" r="0.50" fill="#2b2b2b"/><circle cx="28.6" cy="177.4" r="0.64" fill="#292929"/><circle cx="379.1" cy="147.5" r="0.61" fill="#292929"/><circle cx="44.2" cy="137.8" r="0.64" fill="#363636"/><circle cx="351.8" cy="68.5" r="0.61" fill="#3b3b3b"/><circle cx="319.7" cy="118.7" r="0.59" fill="#373737"/><circle cx="49.1" cy="56.7" r="0.64" fill="#3c3c3c"/><circle cx="298.4" cy="226.9" r="0.73" fill="#424242"/><circle cx="41.5" cy="78.5" r="0.60" fill="#323232"/><circle cx="167.6" cy="84.0" r="0.59" fill="#323232"/><circle cx="218.3" cy="106.8" r="0.51" fill="#464646"/><circle cx="3.6" cy="142.6" r="0.68" fill="#3b3b3b"/><circle cx="151.1" cy="41.8" r="0.75" fill="#3f3f3f"/><circle cx="38.1" cy="225.0" r="0.73" fill="#313131"/><circle cx="161.1" cy="76.1" r="0.65" fill="#353535"/><circle cx="235.1" cy="98.1" r="0.69" fill="#454545"/><circle cx="379.9" cy="156.1" r="0.57" fill="#242424"/><circle cx="371.7" cy="106.4" r="0.56" fill="#323232"/><circle cx="151.0" cy="19.1" r="0.74" fill="#323232"/><circle cx="3.8" cy="73.7" r="0.74" fill="#262626"/><circle cx="360.9" cy="197.2" r="0.64" fill="#363636"/><circle cx="197.0" cy="87.7" r="0.72" fill="#363636"/><circle cx="201.7" cy="5.2" r="0.65" fill="#3a3a3a"/><circle cx="64.3" cy="59.9" r="0.64" fill="#2a2a2a"/><circle cx="158.8" cy="81.6" r="0.71" fill="#434343"/><circle cx="410.3" cy="45.6" r="0.60" fill="#464646"/><circle cx="185.7" cy="138.3" r="0.74" fill="#242424"/><circle cx="333.2" cy="35.0" r="0.69" fill="#292929"/><circle cx="82.0" cy="185.7" r="0.58" fill="#414141"/><circle cx="173.2" cy="152.1" r="0.75" fill="#2d2d2d"/><circle cx="19.3" cy="204.3" r="0.65" fill="#383838"/><circle cx="322.2" cy="9.0" r="0.51" fill="#383838"/><circle cx="346.7" cy="159.4" r="0.71" fill="#333333"/><circle cx="179.3" cy="34.0" r="0.65" fill="#323232"/><circle cx="184.4" cy="241.9" r="0.74" fill="#363636"/><circle cx="154.4" cy="21.4" r="0.56" fill="#3d3d3d"/><circle cx="98.0" cy="118.4" r="0.56" fill="#393939"/><circle cx="240.7" cy="174.8" r="0.69" fill="#272727"/><circle cx="343.1" cy="54.9" r="0.50" fill="#3c3c3c"/><circle cx="63.4" cy="266.5" r="0.59" fill="#434343"/><circle cx="126.1" cy="179.5" r="0.50" fill="#3e3e3e"/><circle cx="217.9" cy="174.3" r="0.66" fill="#2d2d2d"/><circle cx="49.0" cy="56.5" r="0.64" fill="#3f3f3f"/><circle cx="86.7" cy="218.9" r="0.62" fill="#252525"/><circle cx="77.7" cy="67.0" r="0.57" fill="#444444"/><circle cx="393.5" cy="248.2" r="0.66" fill="#3f3f3f"/><circle cx="346.4" cy="127.6" r="0.51" fill="#323232"/><circle cx="151.6" cy="220.0" r="0.62" fill="#292929"/><circle cx="257.7" cy="246.7" r="0.63" fill="#333333"/><circle cx="26.5" cy="141.4" r="0.61" fill="#252525"/><circle cx="144.7" cy="32.6" r="0.64" fill="#2e2e2e"/><circle cx="251.3" cy="210.0" r="0.65" fill="#2d2d2d"/><circle cx="138.7" cy="226.8" r="0.63" fill="#3f3f3f"/><circle cx="56.5" cy="222.0" r="0.69" fill="#2c2c2c"/><circle cx="299.0" cy="43.0" r="0.59" fill="#2a2a2a"/><circle cx="355.9" cy="158.8" r="0.53" fill="#2f2f2f"/><circle cx="146.4" cy="138.0" r="0.72" fill="#2c2c2c"/><circle cx="40.8" cy="253.0" r="0.68" fill="#3e3e3e"/><circle cx="317.1" cy="139.1" r="0.66" fill="#3e3e3e"/><circle cx="361.6" cy="66.0" r="0.57" fill="#464646"/><circle cx="88.4" cy="63.5" r="0.60" fill="#323232"/><circle cx="250.7" cy="41.8" r="0.68" fill="#393939"/><circle cx="124.8" cy="210.6" r="0.52" fill="#3a3a3a"/><circle cx="156.0" cy="31.8" r="0.57" fill="#272727"/><circle cx="106.2" cy="79.0" r="0.50" fill="#454545"/><circle cx="232.3" cy="82.8" r="0.72" fill="#3a3a3a"/><circle cx="150.6" cy="6.3" r="0.72" fill="#3a3a3a"/><circle cx="228.2" cy="212.7" r="0.67" fill="#282828"/><circle cx="94.9" cy="195.4" r="0.51" fill="#3a3a3a"/><circle cx="36.9" cy="200.1" r="0.65" fill="#2b2b2b"/><circle cx="120.4" cy="93.6" r="0.56" fill="#3e3e3e"/><circle cx="232.6" cy="204.4" r="0.52" fill="#2e2e2e"/><circle cx="245.7" cy="245.3" r="0.52" fill="#464646"/><circle cx="228.3" cy="28.2" r="0.70" fill="#2b2b2b"/><circle cx="1.5" cy="248.4" r="0.70" fill="#282828"/><circle cx="77.6" cy="178.6" r="0.72" fill="#303030"/><circle cx="83.1" cy="68.0" r="0.69" fill="#363636"/><circle cx="358.0" cy="198.5" r="0.56" fill="#303030"/><circle cx="199.8" cy="170.9" r="0.72" fill="#414141"/><circle cx="83.6" cy="33.3" r="0.62" fill="#3c3c3c"/><circle cx="162.9" cy="146.7" r="0.66" fill="#282828"/><circle cx="339.9" cy="248.9" r="0.72" fill="#242424"/><circle cx="203.9" cy="68.8" r="0.50" fill="#2f2f2f"/><circle cx="297.3" cy="194.5" r="0.61" fill="#444444"/><circle cx="386.5" cy="92.2" r="0.59" fill="#2d2d2d"/><circle cx="231.8" cy="190.8" r="0.59" fill="#424242"/><circle cx="297.6" cy="19.3" r="0.64" fill="#262626"/><circle cx="360.4" cy="183.1" r="0.71" fill="#2f2f2f"/><circle cx="345.7" cy="33.6" r="0.59" fill="#333333"/><circle cx="369.8" cy="215.9" r="0.70" fill="#373737"/><circle cx="410.6" cy="244.4" r="0.74" fill="#242424"/><circle cx="146.6" cy="33.1" r="0.62" fill="#363636"/><circle cx="5.8" cy="54.1" r="0.66" fill="#262626"/><circle cx="196.7" cy="131.4" r="0.59" fill="#2e2e2e"/><circle cx="358.0" cy="180.7" r="0.62" fill="#252525"/><circle cx="401.2" cy="265.9" r="0.66" fill="#303030"/><circle cx="42.4" cy="146.5" r="0.66" fill="#393939"/><circle cx="143.3" cy="91.6" r="0.53" fill="#303030"/><circle cx="59.6" cy="167.2" r="0.52" fill="#242424"/><circle cx="315.5" cy="227.5" r="0.56" fill="#343434"/><circle cx="333.5" cy="45.9" r="0.65" fill="#454545"/><circle cx="211.5" cy="96.0" r="0.53" fill="#424242"/><circle cx="170.0" cy="116.1" r="0.52" fill="#292929"/><circle cx="139.0" cy="164.7" r="0.67" fill="#252525"/><circle cx="179.6" cy="228.8" r="0.74" fill="#414141"/><circle cx="36.0" cy="30.9" r="0.53" fill="#3a3a3a"/><circle cx="178.3" cy="166.7" r="0.72" fill="#313131"/><circle cx="262.9" cy="65.9" r="0.73" fill="#282828"/><circle cx="263.2" cy="26.0" r="0.65" fill="#3c3c3c"/><circle cx="210.8" cy="139.7" r="0.61" fill="#454545"/><circle cx="83.7" cy="201.5" r="0.61" fill="#383838"/><circle cx="143.7" cy="76.2" r="0.67" fill="#262626"/><circle cx="258.9" cy="42.9" r="0.72" fill="#3f3f3f"/><circle cx="157.1" cy="99.2" r="0.74" fill="#454545"/><circle cx="337.9" cy="180.7" r="0.67" fill="#454545"/><circle cx="161.2" cy="161.2" r="0.65" fill="#2b2b2b"/><circle cx="172.8" cy="102.1" r="0.71" fill="#363636"/><circle cx="237.5" cy="112.1" r="0.60" fill="#292929"/><circle cx="75.2" cy="210.3" r="0.55" fill="#2e2e2e"/><circle cx="280.8" cy="75.0" r="0.63" fill="#262626"/><circle cx="373.1" cy="273.9" r="0.66" fill="#3e3e3e"/><circle cx="269.8" cy="199.0" r="0.58" fill="#3f3f3f"/><circle cx="89.9" cy="70.0" r="0.51" fill="#2c2c2c"/><circle cx="127.1" cy="239.2" r="0.66" fill="#2d2d2d"/><circle cx="80.5" cy="11.5" r="0.55" fill="#464646"/><circle cx="333.9" cy="168.2" r="0.55" fill="#3a3a3a"/><circle cx="373.9" cy="163.5" r="0.71" fill="#313131"/><circle cx="127.1" cy="2.6" r="0.53" fill="#393939"/><circle cx="88.7" cy="174.1" r="0.58" fill="#373737"/><circle cx="82.3" cy="55.4" r="0.67" fill="#424242"/><circle cx="77.4" cy="136.6" r="0.65" fill="#363636"/><circle cx="29.6" cy="16.2" r="0.53" fill="#363636"/><circle cx="97.2" cy="20.5" r="0.53" fill="#343434"/><circle cx="298.8" cy="142.6" r="0.73" fill="#333333"/><circle cx="402.8" cy="203.8" r="0.59" fill="#454545"/><circle cx="250.1" cy="168.2" r="0.60" fill="#222222"/><circle cx="323.5" cy="52.1" r="0.60" fill="#404040"/><circle cx="183.4" cy="96.5" r="0.50" fill="#252525"/><circle cx="208.7" cy="127.0" r="0.57" fill="#232323"/><circle cx="278.3" cy="188.5" r="0.68" fill="#262626"/><circle cx="15.6" cy="198.5" r="0.60" fill="#3c3c3c"/><circle cx="94.6" cy="122.6" r="0.50" fill="#252525"/><circle cx="342.2" cy="119.9" r="0.67" fill="#252525"/><circle cx="179.0" cy="1.8" r="0.56" fill="#2d2d2d"/><circle cx="15.8" cy="44.6" r="0.50" fill="#424242"/><circle cx="301.7" cy="27.3" r="0.74" fill="#464646"/><circle cx="182.5" cy="64.7" r="0.55" fill="#3e3e3e"/><circle cx="363.3" cy="209.0" r="0.70" fill="#232323"/><circle cx="202.0" cy="204.5" r="0.51" fill="#424242"/><circle cx="32.5" cy="11.6" r="0.56" fill="#373737"/><circle cx="102.4" cy="173.9" r="0.70" fill="#282828"/><circle cx="227.5" cy="28.5" r="0.73" fill="#3c3c3c"/><circle cx="385.6" cy="73.8" r="0.58" fill="#454545"/><circle cx="368.6" cy="17.0" r="0.58" fill="#232323"/><circle cx="215.5" cy="88.4" r="0.53" fill="#3c3c3c"/><circle cx="130.8" cy="24.2" r="0.71" fill="#313131"/><circle cx="243.6" cy="27.7" r="0.67" fill="#262626"/><circle cx="199.2" cy="155.0" r="0.54" fill="#444444"/><circle cx="308.3" cy="32.7" r="0.51" fill="#252525"/><circle cx="90.2" cy="64.8" r="0.55" fill="#383838"/><circle cx="104.0" cy="78.6" r="0.52" fill="#363636"/><circle cx="8.5" cy="222.1" r="0.69" fill="#393939"/><circle cx="45.4" cy="66.3" r="0.59" fill="#393939"/><circle cx="120.0" cy="199.6" r="0.56" fill="#2a2a2a"/><circle cx="220.6" cy="104.3" r="0.69" fill="#383838"/><circle cx="344.4" cy="182.4" r="0.58" fill="#383838"/><circle cx="52.2" cy="192.4" r="0.66" fill="#393939"/><circle cx="217.4" cy="249.1" r="0.71" fill="#3f3f3f"/><circle cx="217.6" cy="47.6" r="0.70" fill="#313131"/><circle cx="227.4" cy="18.5" r="0.72" fill="#3b3b3b"/><circle cx="381.8" cy="218.1" r="0.51" fill="#323232"/><circle cx="3.3" cy="111.1" r="0.71" fill="#2f2f2f"/><circle cx="131.9" cy="204.8" r="0.60" fill="#232323"/><circle cx="210.4" cy="268.1" r="0.61" fill="#2e2e2e"/><circle cx="33.0" cy="229.0" r="0.53" fill="#3b3b3b"/><circle cx="7.6" cy="19.9" r="0.61" fill="#404040"/><circle cx="101.2" cy="249.2" r="0.54" fill="#2f2f2f"/><circle cx="345.3" cy="7.8" r="0.57" fill="#434343"/><circle cx="380.6" cy="138.3" r="0.69" fill="#414141"/><circle cx="9.5" cy="83.2" r="0.61" fill="#3f3f3f"/><circle cx="353.5" cy="61.7" r="0.59" fill="#454545"/><circle cx="88.4" cy="258.3" r="0.70" fill="#2d2d2d"/><circle cx="212.8" cy="81.4" r="0.51" fill="#2d2d2d"/><circle cx="24.9" cy="84.0" r="0.71" fill="#444444"/><circle cx="292.0" cy="174.0" r="0.55" fill="#232323"/><circle cx="28.5" cy="84.3" r="0.50" fill="#383838"/><circle cx="295.4" cy="159.7" r="0.59" fill="#424242"/><circle cx="43.7" cy="164.7" r="0.61" fill="#3c3c3c"/><circle cx="314.0" cy="148.4" r="0.54" fill="#414141"/><circle cx="67.4" cy="254.8" r="0.69" fill="#3a3a3a"/><circle cx="51.2" cy="227.8" r="0.66" fill="#404040"/><circle cx="196.1" cy="30.2" r="0.52" fill="#262626"/><circle cx="301.5" cy="95.0" r="0.71" fill="#303030"/><circle cx="150.0" cy="91.8" r="0.55" fill="#444444"/><circle cx="363.5" cy="133.9" r="0.68" fill="#2c2c2c"/><circle cx="348.3" cy="255.0" r="0.64" fill="#3d3d3d"/><circle cx="135.0" cy="194.3" r="0.59" fill="#383838"/><circle cx="144.1" cy="222.2" r="0.69" fill="#353535"/><circle cx="50.0" cy="106.2" r="0.54" fill="#313131"/><circle cx="12.3" cy="48.8" r="0.72" fill="#3f3f3f"/><circle cx="30.3" cy="68.9" r="0.53" fill="#323232"/><circle cx="72.2" cy="2.5" r="0.66" fill="#393939"/><circle cx="100.7" cy="133.9" r="0.66" fill="#3f3f3f"/><circle cx="159.4" cy="60.7" r="0.50" fill="#414141"/><circle cx="84.9" cy="5.7" r="0.68" fill="#2f2f2f"/><circle cx="114.3" cy="22.9" r="0.73" fill="#383838"/><circle cx="44.1" cy="107.3" r="0.74" fill="#454545"/><circle cx="177.5" cy="144.6" r="0.74" fill="#383838"/><circle cx="366.4" cy="94.6" r="0.66" fill="#363636"/><circle cx="142.7" cy="57.2" r="0.54" fill="#3a3a3a"/><circle cx="102.3" cy="98.3" r="0.65" fill="#353535"/><circle cx="397.3" cy="105.0" r="0.67" fill="#252525"/><circle cx="339.3" cy="32.0" r="0.53" fill="#404040"/><circle cx="213.4" cy="229.0" r="0.55" fill="#323232"/><circle cx="355.9" cy="47.3" r="0.70" fill="#242424"/><circle cx="339.7" cy="207.3" r="0.64" fill="#3f3f3f"/><circle cx="175.7" cy="243.6" r="0.68" fill="#272727"/><circle cx="127.5" cy="111.6" r="0.65" fill="#323232"/><circle cx="215.2" cy="95.0" r="0.67" fill="#2d2d2d"/><circle cx="29.9" cy="11.4" r="0.64" fill="#333333"/><circle cx="372.2" cy="169.1" r="0.62" fill="#2d2d2d"/><circle cx="179.1" cy="183.7" r="0.72" fill="#2b2b2b"/><circle cx="15.4" cy="94.2" r="0.56" fill="#323232"/><circle cx="226.9" cy="59.8" r="0.64" fill="#242424"/><circle cx="30.8" cy="275.4" r="0.57" fill="#222222"/><circle cx="351.9" cy="212.5" r="0.67" fill="#2e2e2e"/><circle cx="328.5" cy="215.4" r="0.64" fill="#292929"/><circle cx="62.4" cy="234.1" r="0.69" fill="#333333"/><circle cx="152.9" cy="132.6" r="0.71" fill="#3b3b3b"/><circle cx="368.2" cy="161.3" r="0.52" fill="#252525"/><circle cx="33.5" cy="148.1" r="0.56" fill="#2f2f2f"/><circle cx="168.6" cy="252.5" r="0.68" fill="#282828"/><circle cx="203.3" cy="73.9" r="0.71" fill="#444444"/><circle cx="368.8" cy="56.0" r="0.72" fill="#303030"/><circle cx="243.2" cy="36.0" r="0.58" fill="#232323"/><circle cx="386.6" cy="10.4" r="0.69" fill="#3a3a3a"/><circle cx="248.3" cy="194.8" r="0.66" fill="#333333"/><circle cx="229.5" cy="242.6" r="0.75" fill="#757575"/><circle cx="149.6" cy="186.1" r="0.75" fill="#7e7e7e"/><circle cx="12.1" cy="8.1" r="0.75" fill="#606060"/><circle cx="256.1" cy="118.0" r="0.75" fill="#6f6f6f"/><circle cx="217.7" cy="112.5" r="0.75" fill="#6c6c6c"/><circle cx="304.3" cy="36.1" r="0.75" fill="#707070"/><circle cx="401.3" cy="153.6" r="0.75" fill="#747474"/><circle cx="124.3" cy="163.7" r="0.75" fill="#888888"/><circle cx="14.1" cy="85.1" r="0.75" fill="#6f6f6f"/><circle cx="35.5" cy="212.0" r="0.75" fill="#6c6c6c"/><circle cx="118.3" cy="86.4" r="0.75" fill="#4f4f4f"/><circle cx="289.3" cy="136.2" r="0.75" fill="#5b5b5b"/><circle cx="256.9" cy="193.6" r="0.75" fill="#828282"/><circle cx="347.7" cy="255.3" r="0.75" fill="#8c8c8c"/><circle cx="387.0" cy="16.6" r="0.75" fill="#878787"/><circle cx="290.8" cy="118.7" r="0.75" fill="#5f5f5f"/><circle cx="28.3" cy="209.0" r="0.75" fill="#7f7f7f"/><circle cx="14.0" cy="75.7" r="0.75" fill="#8a8a8a"/><circle cx="138.6" cy="120.2" r="0.75" fill="#5b5b5b"/><circle cx="139.9" cy="259.4" r="0.75" fill="#626262"/><circle cx="139.0" cy="86.2" r="0.75" fill="#707070"/><circle cx="314.7" cy="114.9" r="0.75" fill="#7e7e7e"/><circle cx="48.0" cy="233.6" r="0.75" fill="#8b8b8b"/><circle cx="86.6" cy="86.7" r="0.75" fill="#646464"/><circle cx="196.9" cy="275.4" r="0.75" fill="#6f6f6f"/><circle cx="241.9" cy="249.0" r="0.75" fill="#6b6b6b"/><circle cx="339.3" cy="145.2" r="0.75" fill="#585858"/><circle cx="204.9" cy="110.3" r="0.75" fill="#787878"/><circle cx="283.8" cy="174.9" r="0.75" fill="#8c8c8c"/><circle cx="223.7" cy="10.0" r="0.75" fill="#8a8a8a"/><circle cx="107.9" cy="35.2" r="0.75" fill="#575757"/><circle cx="177.2" cy="212.3" r="0.75" fill="#686868"/><circle cx="269.1" cy="261.6" r="0.75" fill="#7c7c7c"/><circle cx="182.0" cy="154.5" r="0.75" fill="#656565"/><circle cx="345.4" cy="1.9" r="0.75" fill="#575757"/><circle cx="66.3" cy="38.3" r="0.75" fill="#8b8b8b"/><circle cx="201.2" cy="11.1" r="0.75" fill="#5b5b5b"/><circle cx="162.3" cy="119.9" r="0.75" fill="#4c4c4c"/><circle cx="335.1" cy="119.5" r="0.75" fill="#898989"/><circle cx="95.5" cy="190.9" r="0.75" fill="#8a8a8a"/><circle cx="300.7" cy="109.6" r="0.75" fill="#656565"/><circle cx="176.8" cy="71.9" r="0.75" fill="#898989"/><circle cx="49.0" cy="110.9" r="0.75" fill="#5f5f5f"/><circle cx="177.8" cy="86.2" r="0.75" fill="#777777"/><circle cx="387.5" cy="246.5" r="0.75" fill="#676767"/><circle cx="224.5" cy="72.7" r="0.75" fill="#777777"/><circle cx="209.4" cy="120.9" r="0.75" fill="#575757"/><circle cx="363.3" cy="216.6" r="0.75" fill="#5e5e5e"/><circle cx="358.6" cy="249.8" r="0.75" fill="#535353"/><circle cx="317.4" cy="49.5" r="0.75" fill="#686868"/><circle cx="78.4" cy="176.0" r="0.75" fill="#686868"/><circle cx="347.2" cy="248.8" r="0.75" fill="#6f6f6f"/><circle cx="350.6" cy="60.1" r="0.75" fill="#575757"/><circle cx="195.9" cy="136.9" r="0.75" fill="#5a5a5a"/><circle cx="181.8" cy="192.6" r="0.75" fill="#6a6a6a"/><circle cx="11.4" cy="239.1" r="0.75" fill="#636363"/><circle cx="216.5" cy="255.5" r="0.75" fill="#797979"/><circle cx="218.2" cy="275.7" r="0.75" fill="#616161"/><circle cx="363.9" cy="72.0" r="0.75" fill="#8b8b8b"/><circle cx="295.5" cy="260.1" r="0.75" fill="#6a6a6a"/><circle cx="387.7" cy="80.0" r="0.75" fill="#787878"/><circle cx="161.6" cy="257.1" r="0.75" fill="#5a5a5a"/><circle cx="104.4" cy="160.1" r="0.75" fill="#818181"/><circle cx="71.6" cy="191.0" r="0.75" fill="#7d7d7d"/><circle cx="364.5" cy="131.1" r="0.75" fill="#6f6f6f"/><circle cx="123.0" cy="54.4" r="0.75" fill="#696969"/><circle cx="146.0" cy="107.8" r="0.75" fill="#535353"/><circle cx="290.0" cy="163.4" r="0.75" fill="#565656"/><circle cx="277.6" cy="155.0" r="0.75" fill="#696969"/><circle cx="42.6" cy="240.5" r="0.75" fill="#868686"/><circle cx="368.8" cy="39.1" r="0.75" fill="#646464"/><circle cx="212.5" cy="17.0" r="0.75" fill="#4f4f4f"/><circle cx="308.5" cy="81.9" r="0.75" fill="#787878"/><circle cx="90.9" cy="206.4" r="0.75" fill="#828282"/><circle cx="119.4" cy="104.5" r="0.75" fill="#505050"/><circle cx="173.7" cy="37.4" r="0.75" fill="#4d4d4d"/><circle cx="142.4" cy="138.2" r="0.75" fill="#898989"/><circle cx="291.1" cy="133.1" r="0.75" fill="#575757"/><circle cx="385.4" cy="212.2" r="0.75" fill="#656565"/><circle cx="58.9" cy="70.1" r="0.75" fill="#565656"/><circle cx="78.8" cy="59.9" r="0.75" fill="#757575"/><circle cx="117.9" cy="213.0" r="0.75" fill="#575757"/><circle cx="58.5" cy="212.8" r="0.75" fill="#707070"/><circle cx="182.9" cy="226.5" r="0.75" fill="#4e4e4e"/><circle cx="282.9" cy="21.5" r="0.75" fill="#8c8c8c"/><circle cx="76.2" cy="192.6" r="0.75" fill="#6c6c6c"/><circle cx="408.3" cy="123.6" r="0.75" fill="#4c4c4c"/><circle cx="192.7" cy="208.1" r="0.75" fill="#767676"/><circle cx="152.4" cy="63.8" r="0.75" fill="#5e5e5e"/><circle cx="69.9" cy="90.6" r="0.75" fill="#8b8b8b"/><circle cx="308.7" cy="129.3" r="0.75" fill="#626262"/><circle cx="408.1" cy="41.2" r="0.75" fill="#8a8a8a"/><circle cx="30.3" cy="228.8" r="0.75" fill="#707070"/><circle cx="166.2" cy="88.6" r="0.75" fill="#5a5a5a"/><circle cx="252.7" cy="272.9" r="0.75" fill="#717171"/><circle cx="311.5" cy="253.4" r="0.75" fill="#4b4b4b"/><circle cx="364.4" cy="64.1" r="0.75" fill="#797979"/><circle cx="386.3" cy="236.8" r="0.75" fill="#7d7d7d"/><circle cx="109.5" cy="210.7" r="0.75" fill="#5e5e5e"/><circle cx="289.9" cy="89.5" r="0.75" fill="#767676"/><circle cx="171.6" cy="48.7" r="0.75" fill="#797979"/><circle cx="88.6" cy="29.2" r="0.75" fill="#6d6d6d"/><circle cx="263.9" cy="65.4" r="0.75" fill="#525252"/><circle cx="196.8" cy="38.1" r="0.75" fill="#878787"/><circle cx="217.6" cy="66.9" r="0.75" fill="#505050"/><circle cx="70.8" cy="177.5" r="0.75" fill="#4c4c4c"/><circle cx="83.7" cy="269.1" r="0.75" fill="#5f5f5f"/><circle cx="339.7" cy="191.8" r="0.75" fill="#888888"/><circle cx="36.9" cy="259.6" r="0.75" fill="#808080"/><circle cx="384.8" cy="25.6" r="0.75" fill="#8b8b8b"/><circle cx="395.8" cy="238.8" r="0.75" fill="#747474"/><circle cx="239.1" cy="97.6" r="0.75" fill="#6d6d6d"/><circle cx="386.1" cy="116.2" r="0.75" fill="#848484"/><circle cx="319.4" cy="8.9" r="0.75" fill="#6f6f6f"/><circle cx="354.5" cy="168.7" r="0.75" fill="#6b6b6b"/><circle cx="175.0" cy="275.8" r="0.75" fill="#6b6b6b"/><circle cx="133.4" cy="22.0" r="0.75" fill="#767676"/><circle cx="242.8" cy="202.3" r="0.75" fill="#7b7b7b"/><circle cx="212.2" cy="164.2" r="0.75" fill="#7e7e7e"/><circle cx="234.9" cy="121.7" r="0.75" fill="#868686"/><circle cx="410.7" cy="19.3" r="0.75" fill="#878787"/><circle cx="106.5" cy="59.1" r="0.75" fill="#646464"/><circle cx="201.5" cy="211.0" r="0.75" fill="#797979"/><circle cx="170.2" cy="18.7" r="0.75" fill="#595959"/><circle cx="110.1" cy="260.3" r="0.75" fill="#535353"/><circle cx="395.5" cy="73.4" r="0.75" fill="#858585"/><circle cx="130.4" cy="36.2" r="0.75" fill="#5c5c5c"/><circle cx="312.7" cy="118.0" r="0.75" fill="#666666"/><circle cx="315.0" cy="206.5" r="0.75" fill="#696969"/><circle cx="355.1" cy="260.3" r="0.75" fill="#8c8c8c"/><circle cx="302.4" cy="43.1" r="0.75" fill="#848484"/><circle cx="130.6" cy="60.6" r="0.75" fill="#7a7a7a"/><circle cx="34.8" cy="273.6" r="0.75" fill="#878787"/><circle cx="40.3" cy="219.4" r="0.75" fill="#707070"/><circle cx="325.2" cy="71.1" r="0.75" fill="#707070"/><circle cx="101.4" cy="182.1" r="0.75" fill="#4d4d4d"/><circle cx="181.7" cy="64.7" r="0.75" fill="#636363"/><circle cx="290.2" cy="78.7" r="0.75" fill="#5d5d5d"/><circle cx="379.8" cy="119.6" r="0.75" fill="#626262"/><circle cx="341.3" cy="90.2" r="0.75" fill="#818181"/><circle cx="57.5" cy="49.6" r="0.75" fill="#595959"/><circle cx="397.8" cy="240.6" r="0.75" fill="#4f4f4f"/><circle cx="229.3" cy="266.7" r="0.75" fill="#7b7b7b"/><circle cx="55.2" cy="136.3" r="0.75" fill="#838383"/><circle cx="253.4" cy="60.4" r="0.75" fill="#555555"/><circle cx="304.3" cy="45.6" r="0.75" fill="#6f6f6f"/><circle cx="378.6" cy="227.5" r="0.75" fill="#6c6c6c"/><circle cx="345.2" cy="103.5" r="0.75" fill="#858585"/><circle cx="273.6" cy="63.5" r="0.75" fill="#4c4c4c"/><circle cx="363.1" cy="37.3" r="0.75" fill="#5e5e5e"/><circle cx="219.7" cy="155.8" r="0.75" fill="#606060"/><circle cx="282.5" cy="22.4" r="0.75" fill="#555555"/><circle cx="174.7" cy="75.0" r="0.75" fill="#616161"/><circle cx="318.8" cy="261.5" r="0.75" fill="#8c8c8c"/><circle cx="319.8" cy="270.4" r="0.75" fill="#727272"/><circle cx="100.9" cy="220.3" r="0.75" fill="#646464"/><circle cx="339.0" cy="178.9" r="0.75" fill="#646464"/><circle cx="49.0" cy="79.9" r="0.75" fill="#555555"/><circle cx="6.6" cy="165.2" r="0.75" fill="#808080"/><circle cx="169.4" cy="73.2" r="0.75" fill="#515151"/></g><circle cx="97.8" cy="73.1" r="3" fill="url(#sg)" opacity="0.45"/><circle cx="97.8" cy="73.1" r="1.2" fill="#f0f0f0" filter="url(#bl)"/><circle cx="308.3" cy="223" r="4" fill="url(#sg)" opacity="0.3"/><circle cx="308.3" cy="223" r="1" fill="#bbb" filter="url(#bl)"/></svg>
<div class="a" style="left:716px;top:31px;width:1.8px;height:391px;background:linear-gradient(90deg,#4a5270,#5c6890 40%,#5a6690 60%,#4a4a60)"></div>
<div class="a" style="left:535px;top:45.5px;width:247px;height:274.3px;background:#cecece;border-left:0.5px solid #3a3a3a"></div>
<div class="a" style="left:535px;top:319.8px;width:248px;height:1.6px;background:#373737"></div>
<div class="a" style="left:535px;top:45.5px;width:247px;height:10.5px;background:linear-gradient(#7c7c7c,#666 45%,#6e6e6e 80%,#858585);border-radius:2px 2px 0 0"></div>
<div class="a" style="left:536.2px;top:47.1px;width:8px;height:7.6px;background:linear-gradient(135deg,#5a68e8,#6a88f0 60%,#88a8f8)"></div>
<svg class="a" style="left:536.2px;top:47.1px" width="8" height="8"><path d="M1.8 6.8 L3.2 1.3 L4.2 5.6 L6.5 6.2 V7 H1.6Z" fill="#f08838"/><path d="M2.2 6.6 L3.2 2.8 L3.8 6.2Z" fill="#ffb060"/></svg>
<div class="t" style="left:623.40px;top:49.68px;font-size:5.69px;font-weight:bold;color:#cfcfcf;transform:scaleX(1.017);transform-origin:0 0;">HistogramTransformation</div>
<div class="a" style="left:765px;top:47.2px;width:7.3px;height:7.3px;background:linear-gradient(#858585,#666);border:0.6px solid #959595;border-radius:1px"></div>
<svg class="a" style="left:765px;top:47.2px" width="8" height="8"><path d="M2.2 2.3 H5.2 M2.2 5.3 H5.2" stroke="#f0f0f0" stroke-width="0.8"/><path d="M2.5 2.6 L3.7 3.8 L4.9 2.6Z M2.5 5 L3.7 3.8 L4.9 5Z" fill="#f0f0f0"/></svg>
<div class="a" style="left:773.6px;top:47.2px;width:7.3px;height:7.3px;background:linear-gradient(#858585,#666);border:0.6px solid #959595;border-radius:1px"></div>
<svg class="a" style="left:773.6px;top:47.2px" width="8" height="8"><path d="M2.1 2.1 L5.2 5.2 M5.2 2.1 L2.1 5.2" stroke="#f4f4f4" stroke-width="1"/></svg>
<div class="a" style="left:535.5px;top:56px;width:246.5px;height:263.8px;background:#cecece"></div>
<div class="a" style="left:536px;top:56px;width:246px;height:2px;background:#e2e2e2"></div>
<svg class="a" style="left:538px;top:58px" width="242" height="80.5"><rect width="242" height="80.5" fill="#0f0f0f"/><line x1="30.25" y1="0" x2="30.25" y2="80.5" stroke="#1a1a1a" stroke-width="0.9"/><line x1="60.5" y1="0" x2="60.5" y2="80.5" stroke="#3a3a3a" stroke-width="0.9"/><line x1="90.75" y1="0" x2="90.75" y2="80.5" stroke="#1a1a1a" stroke-width="0.9"/><line x1="121.0" y1="0" x2="121.0" y2="80.5" stroke="#3a3a3a" stroke-width="0.9"/><line x1="151.25" y1="0" x2="151.25" y2="80.5" stroke="#1a1a1a" stroke-width="0.9"/><line x1="181.5" y1="0" x2="181.5" y2="80.5" stroke="#3a3a3a" stroke-width="0.9"/><line x1="211.75" y1="0" x2="211.75" y2="80.5" stroke="#1a1a1a" stroke-width="0.9"/><line x1="0" y1="10.0" x2="242" y2="10.0" stroke="#1a1a1a" stroke-width="0.9"/><line x1="0" y1="20.0" x2="242" y2="20.0" stroke="#3a3a3a" stroke-width="0.9"/><line x1="0" y1="30.0" x2="242" y2="30.0" stroke="#1a1a1a" stroke-width="0.9"/><line x1="0" y1="40.0" x2="242" y2="40.0" stroke="#3a3a3a" stroke-width="0.9"/><line x1="0" y1="50.0" x2="242" y2="50.0" stroke="#1a1a1a" stroke-width="0.9"/><line x1="0" y1="60.0" x2="242" y2="60.0" stroke="#3a3a3a" stroke-width="0.9"/><line x1="0" y1="70.0" x2="242" y2="70.0" stroke="#1a1a1a" stroke-width="0.9"/><polyline points="0,80.50 1,80.50 2,80.50 3,80.50 4,80.50 5,80.50 6,80.50 7,80.50 8,80.50 9,80.50 10,80.50 11,80.50 12,80.50 13,80.50 14,80.50 15,80.50 16,80.50 17,80.50 18,80.50 19,80.50 20,80.50 21,80.49 22,80.49 23,80.47 24,80.44 25,80.39 26,80.29 27,80.11 28,79.81 29,79.31 30,78.52 31,77.31 32,75.53 33,73.00 34,69.55 35,65.04 36,59.37 37,52.56 38,44.75 39,36.23 40,27.46 41,19.00 42,11.50 43,5.59 44,1.80 45,-0.46 46,6.33 47,14.33 48,23.10 49,32.02 50,40.44 51,47.90 52,54.13 53,59.10 54,62.94 55,65.85 56,68.08 57,69.81 58,71.19 59,72.32 60,73.28 61,74.10 62,74.82 63,75.44 64,75.99 65,76.47 66,76.90 67,77.27 68,77.60 69,77.88 70,78.14 71,78.36 72,78.56 73,78.73 74,78.89 75,79.02 76,79.14 77,79.25 78,79.34 79,79.43 80,79.50 81,79.57 82,79.63 83,79.68 84,79.72 85,79.77 86,79.80 87,79.84 88,79.87 89,79.90 90,79.92 91,79.94 92,79.97 93,79.98 94,80.00 95,80.02 96,80.03 97,80.05 98,80.06 99,80.07 100,80.08 101,80.09 102,80.10 103,80.11 104,80.12 105,80.13 106,80.14 107,80.15 108,80.15 109,80.16 110,80.17 111,80.17 112,80.18 113,80.18 114,80.19 115,80.20 116,80.20 117,80.21 118,80.21 119,80.22 120,80.22 121,80.23 122,80.23 123,80.24 124,80.24 125,80.25 126,80.25 127,80.25 128,80.26 129,80.26 130,80.27 131,80.27 132,80.27 133,80.28 134,80.28 135,80.29 136,80.29 137,80.29 138,80.30 139,80.30 140,80.30 141,80.31 142,80.31 143,80.31 144,80.32 145,80.32 146,80.32 147,80.32 148,80.33 149,80.33 150,80.33 151,80.34 152,80.34 153,80.34 154,80.34 155,80.35 156,80.35 157,80.35 158,80.35 159,80.36 160,80.36 161,80.36 162,80.36 163,80.37 164,80.37 165,80.37 166,80.37 167,80.37 168,80.38 169,80.38 170,80.38 171,80.38 172,80.38 173,80.39 174,80.39 175,80.39 176,80.39 177,80.39 178,80.40 179,80.40 180,80.40 181,80.40 182,80.40 183,80.40 184,80.41 185,80.41 186,80.41 187,80.41 188,80.41 189,80.41 190,80.41 191,80.42 192,80.42 193,80.42 194,80.42 195,80.42 196,80.42 197,80.42 198,80.43 199,80.43 200,80.43 201,80.43 202,80.43 203,80.43 204,80.43 205,80.43 206,80.43 207,80.44 208,80.44 209,80.44 210,80.44 211,80.44 212,80.44 213,80.44 214,80.44 215,80.44 216,80.44 217,80.45 218,80.45 219,80.45 220,80.45 221,80.45 222,80.45 223,80.45 224,80.45 225,80.45 226,80.45 227,80.45 228,80.45 229,80.46 230,80.46 231,80.46 232,80.46 233,80.46 234,80.46 235,80.46 236,80.46 237,80.46 238,80.46 239,80.46 240,80.46 241,80.46 242,80.46" fill="none" stroke="#b0b0b0" stroke-width="0.8"/></svg>
<div class="a" style="left:536px;top:138.5px;width:246px;height:12.8px;background:linear-gradient(#e2e2e2,#d4d4d4)"></div>
<svg class="a" style="left:538px;top:151.3px" width="242" height="78.5"><rect width="242" height="78.5" fill="#0f0f0f"/><line x1="0" y1="9.125" x2="242" y2="9.125" stroke="#1a1a1a" stroke-width="0.9"/><line x1="0" y1="18.25" x2="242" y2="18.25" stroke="#3a3a3a" stroke-width="0.9"/><line x1="0" y1="27.375" x2="242" y2="27.375" stroke="#1a1a1a" stroke-width="0.9"/><line x1="0" y1="36.5" x2="242" y2="36.5" stroke="#3a3a3a" stroke-width="0.9"/><line x1="0" y1="45.625" x2="242" y2="45.625" stroke="#1a1a1a" stroke-width="0.9"/><line x1="0" y1="54.75" x2="242" y2="54.75" stroke="#3a3a3a" stroke-width="0.9"/><line x1="0" y1="63.875" x2="242" y2="63.875" stroke="#1a1a1a" stroke-width="0.9"/><line x1="0" y1="73.0" x2="242" y2="73.0" stroke="#3a3a3a" stroke-width="0.9"/><polyline points="103,73 111.6,72.2 119.7,0 127.6,62.5 137.2,71.5 176.4,72.8" fill="none" stroke="#c8c8c8" stroke-width="0.8"/><polyline points="103,73.00 104,71.90 105,70.85 106,69.84 107,68.87 108,67.94 109,67.05 110,66.18 111,65.35 112,64.54 113,63.77 114,63.01 115,62.28 116,61.57 117,60.88 118,60.21 119,59.55 120,58.92 121,58.30 122,57.70 123,57.11 124,56.53 125,55.97 126,55.42 127,54.89 128,54.36 129,53.85 130,53.35 131,52.85 132,52.37 133,51.90 134,51.43 135,50.98 136,50.53 137,50.09 138,49.66 139,49.24 140,48.82 141,48.42 142,48.01 143,47.62 144,47.23 145,46.85 146,46.47 147,46.10 148,45.73 149,45.37 150,45.02 151,44.67 152,44.32 153,43.98 154,43.65 155,43.32 156,42.99 157,42.67 158,42.36 159,42.04 160,41.73 161,41.43 162,41.13 163,40.83 164,40.54 165,40.24 166,39.96 167,39.67 168,39.39 169,39.12 170,38.84 171,38.57 172,38.30 173,38.04 174,37.78 175,37.52 176,37.26 177,37.01 178,36.76 179,36.51 180,36.26 181,36.02 182,35.78 183,35.54 184,35.30 185,35.07 186,34.84 187,34.61 188,34.38 189,34.16 190,33.93 191,33.71 192,33.49 193,33.28 194,33.06 195,32.85 196,32.64 197,32.43 198,32.22 199,32.01 200,31.81 201,31.61 202,31.41 203,31.21 204,31.01 205,30.81 206,30.62 207,30.43 208,30.23 209,30.05 210,29.86 211,29.67 212,29.48 213,29.30 214,29.12 215,28.94 216,28.76 217,28.58 218,28.40 219,28.23 220,28.05 221,27.88 222,27.71 223,27.54 224,27.37 225,27.20 226,27.03 227,26.86 228,26.70 229,26.53 230,26.37 231,26.21 232,26.05 233,25.89 234,25.73 235,25.57 236,25.42 237,25.26 238,25.11 239,24.95 240,24.80 241,24.65 242,24.50" fill="none" stroke="#bdbdbd" stroke-width="0.8"/><path d="M103 74 L100.5 78 L105.5 78 Z" fill="#333" stroke="#ddd" stroke-width="0.7"/><path d="M176.5 74 L174 78 L179 78 Z" fill="#333" stroke="#ddd" stroke-width="0.7"/></svg>
<div class="a" style="left:536px;top:229.8px;width:246px;height:7.5px;background:linear-gradient(#e4e4e4,#cfcfcf);border-bottom:0.6px solid #9c9c9c"></div>
<div class="a" style="left:545.5px;top:230.3px;width:24px;height:6.5px;background:linear-gradient(#dedede,#bcbcbc);border:0.5px solid #9a9a9a;border-radius:1px"></div>
<div class="a" style="left:555px;top:232.3px;width:4px;height:2.5px;border-left:0.6px solid #888;border-right:0.6px solid #888"></div>
<svg class="a" style="left:538px;top:230px" width="242" height="7"><path d="M3 3.5 L5 2 L5 5 Z" fill="#333"/><path d="M239 3.5 L237 2 L237 5 Z" fill="#333"/></svg>
<div class="a" style="left:536px;top:239px;width:246px;height:0.7px;background:#ababab"></div>
<div class="a" style="left:536px;top:246.3px;width:246px;height:0.7px;background:#dadada"></div>
<div class="a" style="left:537.3px;top:141.2px;width:8.2px;height:7.8px;background:#f0f0f0;border:0.6px solid #b0b0b0;border-radius:1px"></div>
<svg class="a" style="left:538px;top:139px" width="90" height="12"><path d="M3.5 2.8 L4.4 5.1 L6.7 6 L4.4 6.9 L3.5 9.2 L2.6 6.9 L0.3 6 L2.6 5.1Z" fill="#3a3ae8"/><circle cx="3.5" cy="6" r="1.3" fill="#3a3ae8"/><g fill="#2020e0"><rect x="10.5" y="2.5" width="2" height="2"/><rect x="14.5" y="2.5" width="2" height="2"/><rect x="10.5" y="7" width="2" height="2"/><rect x="14.5" y="7" width="2" height="2"/><rect x="12.5" y="4.5" width="2" height="2.5" opacity="0.5"/></g><g fill="#2020e0"><rect x="20" y="3" width="2.2" height="2.2"/><rect x="23" y="3" width="2.2" height="2.2"/><rect x="20" y="6.5" width="2.2" height="2.2"/><rect x="23" y="6.5" width="2.2" height="2.2"/></g><circle cx="32" cy="3.6" r="1.1" fill="#3a3ae8"/><circle cx="32" cy="8.4" r="1.1" fill="#3a3ae8"/><circle cx="29.6" cy="6" r="1.1" fill="#3a3ae8"/><circle cx="34.4" cy="6" r="1.1" fill="#3a3ae8"/><circle cx="32" cy="6" r="0.9" fill="#8a8af0"/></svg>
<div class="a" style="left:576.5px;top:140.5px;width:10.5px;height:9px;background:#e6e6e6"></div>
<div class="t" style="left:576.74px;top:142.68px;font-size:5.69px;font-weight:normal;color:#333;transform:scaleX(1.065);transform-origin:0 0;-webkit-text-stroke:0.15px currentColor;">9</div>
<div class="a" style="left:587px;top:140.5px;width:6px;height:9px;background:linear-gradient(#dcdce2,#c8c8d0);border:0.5px solid #c0c0c8;border-radius:1px"></div>
<svg class="a" style="left:587px;top:140.5px" width="6" height="9"><path d="M1.8 3.3 L3 2 L4.2 3.3Z M1.8 5.7 L3 7 L4.2 5.7Z" fill="#777"/></svg>
<div class="a" style="left:595.5px;top:140.5px;width:11px;height:9px;background:#e6e6e6"></div>
<div class="t" style="left:596.74px;top:142.68px;font-size:5.69px;font-weight:normal;color:#333;transform:scaleX(0.763);transform-origin:0 0;-webkit-text-stroke:0.15px currentColor;">1</div>
<div class="a" style="left:606.5px;top:140.5px;width:6px;height:9px;background:linear-gradient(#dcdce2,#c8c8d0);border:0.5px solid #c0c0c8;border-radius:1px"></div>
<svg class="a" style="left:606.5px;top:140.5px" width="6" height="9"><path d="M1.8 3.3 L3 2 L4.2 3.3Z M1.8 5.7 L3 7 L4.2 5.7Z" fill="#777"/></svg>
<div class="a" style="left:616px;top:141px;width:6px;height:8px;background:linear-gradient(#6868f0,#3838e0);border:0.5px solid #2828b0;border-radius:1px"></div>
<svg class="a" style="left:616px;top:141px" width="6" height="8"><path d="M2 1.8 H1.3 V6.2 H2 M4 1.8 H4.7 V6.2 H4" stroke="#fff" stroke-width="0.7" fill="none"/><path d="M3 2.3 V5.8" stroke="#fff" stroke-width="0.8"/></svg>
<svg class="a" style="left:734.8px;top:140.5px" width="6" height="9"><path d="M0.3 1.8 H4.2 L2.25 4.2Z M0.6 4.3 H3.9 L2.25 7.3Z" fill="#3030e8"/><rect x="1" y="6.8" width="2.5" height="1.2" fill="#3030e8"/></svg>
<div class="a" style="left:742.5px;top:140.5px;width:11px;height:9px;background:#e6e6e6"></div>
<div class="t" style="left:744.24px;top:142.68px;font-size:5.69px;font-weight:normal;color:#333;transform:scaleX(0.763);transform-origin:0 0;-webkit-text-stroke:0.15px currentColor;">1</div>
<div class="a" style="left:754px;top:140.5px;width:6px;height:9px;background:linear-gradient(#dcdce2,#c8c8d0);border:0.5px solid #c0c0c8;border-radius:1px"></div>
<svg class="a" style="left:754px;top:140.5px" width="6" height="9"><path d="M1.8 3.3 L3 2 L4.2 3.3Z M1.8 5.7 L3 7 L4.2 5.7Z" fill="#777"/></svg>
<div class="a" style="left:762px;top:140.5px;width:11.5px;height:9px;background:#e6e6e6"></div>
<div class="t" style="left:763.44px;top:142.68px;font-size:5.69px;font-weight:normal;color:#333;transform:scaleX(0.763);transform-origin:0 0;-webkit-text-stroke:0.15px currentColor;">1</div>
<div class="a" style="left:774px;top:140.5px;width:6px;height:9px;background:linear-gradient(#dcdce2,#c8c8d0);border:0.5px solid #c0c0c8;border-radius:1px"></div>
<svg class="a" style="left:774px;top:140.5px" width="6" height="9"><path d="M1.8 3.3 L3 2 L4.2 3.3Z M1.8 5.7 L3 7 L4.2 5.7Z" fill="#777"/></svg>
<div class="a" style="left:537.5px;top:248.3px;width:38px;height:8.2px;background:linear-gradient(#ececec,#d0d0d0);border:0.6px solid #a0a0a0;border-radius:1px"></div>
<div class="t" style="left:538.79px;top:250.77px;font-size:5.35px;font-weight:normal;color:#333;transform:scaleX(0.957);transform-origin:0 0;-webkit-text-stroke:0.15px currentColor;">8-bit (256)</div>
<svg class="a" style="left:570px;top:250.5px" width="5" height="4"><path d="M0.5 1 H4.5 L2.5 3.5 Z" fill="#222"/></svg>
<div class="a" style="left:577.7px;top:248.3px;width:24px;height:8.2px;background:linear-gradient(#ececec,#d0d0d0);border:0.6px solid #a0a0a0;border-radius:1px"></div>
<div class="t" style="left:580.31px;top:250.77px;font-size:5.35px;font-weight:normal;color:#333;transform:scaleX(0.906);transform-origin:0 0;-webkit-text-stroke:0.15px currentColor;">Lines</div>
<svg class="a" style="left:596px;top:250.5px" width="5" height="4"><path d="M0.5 1 H4.5 L2.5 3.5 Z" fill="#222"/></svg>
<svg class="a" style="left:744px;top:248px" width="38" height="9"><path d="M1.5 1.5 V7.5 H6" stroke="#333" stroke-width="0.8" fill="none"/><path d="M2 7 L3 2 L4 7 Z" fill="#d03020"/><path d="M3.5 7 L4.5 5 L5.5 7Z" fill="#3030d0"/><path d="M11 1.5 V7.5 H16" stroke="#333" stroke-width="0.8" fill="none"/><rect x="12" y="2" width="2" height="2" fill="#d03020"/><rect x="14" y="3" width="2" height="2" fill="#3040e0"/><rect x="12" y="5" width="2" height="2" fill="#20a040"/><rect x="18.5" y="0.5" width="8" height="8" fill="#e6e6e6" stroke="#a8a8a8" stroke-width="0.6" rx="1"/><path d="M20.5 2 V7 H25" stroke="#666" stroke-width="0.8" fill="none"/><path d="M21 7 L24.5 2.5" stroke="#d07030" stroke-width="1"/><rect x="28.5" y="0.5" width="8" height="8" fill="#e6e6e6" stroke="#a8a8a8" stroke-width="0.6" rx="1"/><rect x="30.5" y="2.5" width="4" height="4" fill="#3838e8"/></svg>
<div class="a" style="left:537.5px;top:258.3px;width:243.5px;height:9.4px;background:linear-gradient(#e2e2e2,#c8c8c8);border:0.6px solid #a0a0a0;border-radius:1px"></div>
<div class="a" style="left:540px;top:260px;width:5.5px;height:6px;background:linear-gradient(#7e8ef0,#3e52d8);border:0.5px solid #3040b0"></div>
<div class="t" style="left:547.55px;top:260.87px;font-size:5.35px;font-weight:normal;color:#222;transform:scaleX(0.779);transform-origin:0 0;-webkit-text-stroke:0.15px currentColor;">L_DBE</div>
<svg class="a" style="left:774px;top:261px" width="6" height="4"><path d="M0.5 0.8 H5 L2.75 3.5 Z" fill="#222"/></svg>
<div class="a" style="left:540px;top:271.5px;width:6px;height:4px;background:#d00000;border:0.5px solid #600"></div>
<div class="t" style="left:547.43px;top:272.14px;font-size:5.62px;font-weight:normal;color:#555;transform:scaleX(0.797);transform-origin:0 0;">R</div>
<div class="a" style="left:557.7px;top:271.5px;width:6.3px;height:4px;background:#10e010;border:0.5px solid #060"></div>
<div class="t" style="left:565.29px;top:272.14px;font-size:5.62px;font-weight:normal;color:#555;transform:scaleX(0.919);transform-origin:0 0;">G</div>
<div class="a" style="left:575.7px;top:271.5px;width:6px;height:4px;background:#0000c8;border:0.5px solid #006"></div>
<div class="t" style="left:583.20px;top:272.14px;font-size:5.62px;font-weight:normal;color:#555;transform:scaleX(0.878);transform-origin:0 0;">B</div>
<div class="a" style="left:591.3px;top:269.3px;width:28.3px;height:9px;background:#e4e4e4;border:0.6px solid #aaa;border-radius:1px"></div>
<svg class="a" style="left:593.5px;top:271.5px" width="6" height="4"><rect x="0" y="0" width="6" height="4" fill="#444"/><rect x="1" y="0.7" width="1.3" height="2.6" fill="#e02020"/><rect x="2.4" y="0.7" width="1.3" height="2.6" fill="#20c020"/><rect x="3.8" y="0.7" width="1.3" height="2.6" fill="#2030e0"/></svg>
<div class="t" style="left:601.01px;top:272.14px;font-size:5.62px;font-weight:normal;color:#555;transform:scaleX(0.863);transform-origin:0 0;">RGB/K</div>
<div class="a" style="left:623px;top:271.5px;width:6px;height:4px;background:#333;border:0.5px solid #222"></div>
<div class="a" style="left:624px;top:272.2px;width:4px;height:2.5px;background:#666"></div>
<div class="t" style="left:630.47px;top:272.14px;font-size:5.62px;font-weight:normal;color:#555;transform:scaleX(1.268);transform-origin:0 0;">A</div>
<div class="a" style="left:744.9px;top:270px;width:7.5px;height:8.5px;background:#e6e6f0;border:0.6px solid #a8a8c8;border-radius:1px"></div>
<div class="a" style="left:746.5px;top:271.5px;width:4.3px;height:5px;border:0.8px solid #3a3ae8;background:#dde"></div>
<div class="a" style="left:755px;top:271.5px;width:5px;height:5.5px;background:#111"></div>
<div class="a" style="left:757px;top:273.5px;width:1.5px;height:1.5px;background:#eee"></div>
<div class="a" style="left:764px;top:271px;width:5.5px;height:6.5px;background:#888;border:0.5px solid #555"></div>
<div class="a" style="left:773.5px;top:271px;width:5.5px;height:6.5px;background:#eee;border:0.7px solid #555"></div>
<div class="t" style="left:542.52px;top:282.52px;font-size:5.76px;font-weight:normal;color:#2a2a2a;transform:scaleX(0.798);transform-origin:0 0;-webkit-text-stroke:0.15px currentColor;">Shadows:</div>
<div class="a" style="left:565.3px;top:280.8px;width:29px;height:8px;background:#e2e2e2"></div>
<div class="t" style="left:565.92px;top:282.76px;font-size:5.49px;font-weight:normal;color:#222;transform:scaleX(0.840);transform-origin:0 0;-webkit-text-stroke:0.15px currentColor;">0.04743688</div>
<div class="a" style="left:596.3px;top:280px;width:155px;height:10px;background:linear-gradient(#c2c2c2 0,#c2c2c2 0.7px,#d8d8d8 0.7px,#d4d4d4);border-left:0.6px solid #b8b8b8"></div>
<div class="t" style="left:657.12px;top:282.76px;font-size:5.49px;font-weight:normal;color:#2a2a2a;transform:scaleX(0.849);transform-origin:0 0;-webkit-text-stroke:0.15px currentColor;">12272, %0.1150</div>
<div class="t" style="left:538.89px;top:292.56px;font-size:5.49px;font-weight:normal;color:#2a2a2a;transform:scaleX(0.930);transform-origin:0 0;-webkit-text-stroke:0.15px currentColor;">Highlights:</div>
<div class="a" style="left:565.3px;top:290.8px;width:29px;height:8px;background:#e2e2e2"></div>
<div class="t" style="left:566.13px;top:292.56px;font-size:5.49px;font-weight:normal;color:#222;transform:scaleX(0.833);transform-origin:0 0;-webkit-text-stroke:0.15px currentColor;">1.00000000</div>
<div class="a" style="left:596.3px;top:290px;width:155px;height:10px;background:linear-gradient(#c2c2c2 0,#c2c2c2 0.7px,#d8d8d8 0.7px,#d4d4d4);border-left:0.6px solid #b8b8b8"></div>
<div class="t" style="left:661.92px;top:292.56px;font-size:5.49px;font-weight:normal;color:#2a2a2a;transform:scaleX(0.838);transform-origin:0 0;-webkit-text-stroke:0.15px currentColor;">0, %0.0000</div>
<div class="t" style="left:540.90px;top:302.56px;font-size:5.49px;font-weight:normal;color:#2a2a2a;transform:scaleX(0.917);transform-origin:0 0;-webkit-text-stroke:0.15px currentColor;">Midtones:</div>
<div class="a" style="left:565.3px;top:300.8px;width:29px;height:8px;background:#e2e2e2"></div>
<div class="t" style="left:565.92px;top:302.56px;font-size:5.49px;font-weight:normal;color:#222;transform:scaleX(0.840);transform-origin:0 0;-webkit-text-stroke:0.15px currentColor;">0.03514056</div>
<svg class="a" style="left:597.6px;top:301.9px" width="6" height="6"><path d="M0.6 0.6 L2.8 1.5 L5 0.6 L4.1 2.8 L5 5 L2.8 4.1 L0.6 5 L1.5 2.8 Z" fill="#2a2ae8"/></svg>
<svg class="a" style="left:754.5px;top:280.5px" width="26" height="7"><path d="M0.5 0.5 V6.5 H5.5" stroke="#555" stroke-width="0.6" fill="none"/><path d="M1 6.5 L2.5 1 L4 6.5Z" fill="#2828d0"/><rect x="3.5" y="3" width="2" height="3.5" fill="#e0a020"/><path d="M9.5 0.5 V6.5 H14.5" stroke="#555" stroke-width="0.6" fill="none"/><path d="M10 6.5 L11.5 1 L13 6.5Z" fill="#2828d0"/><rect x="12.5" y="3" width="2" height="3.5" fill="#e0a020"/></svg>
<svg class="a" style="left:774px;top:281.3px" width="6" height="6"><path d="M0.6 0.6 L2.8 1.5 L5 0.6 L4.1 2.8 L5 5 L2.8 4.1 L0.6 5 L1.5 2.8 Z" fill="#2a2ae8"/></svg>
<svg class="a" style="left:754.5px;top:291px" width="26" height="7"><path d="M0.5 0.5 V6.5 H5.5" stroke="#555" stroke-width="0.6" fill="none"/><path d="M1 6.5 L2.5 1 L4 6.5Z" fill="#2828d0"/><rect x="3.5" y="3" width="2" height="3.5" fill="#e0a020"/><path d="M9.5 0.5 V6.5 H14.5" stroke="#555" stroke-width="0.6" fill="none"/><path d="M10 6.5 L11.5 1 L13 6.5Z" fill="#2828d0"/><rect x="12.5" y="3" width="2" height="3.5" fill="#e0a020"/></svg>
<svg class="a" style="left:774px;top:291.8px" width="6" height="6"><path d="M0.6 0.6 L2.8 1.5 L5 0.6 L4.1 2.8 L5 5 L2.8 4.1 L0.6 5 L1.5 2.8 Z" fill="#2a2ae8"/></svg>
<div class="a" style="left:730.1px;top:301.1px;width:40.6px;height:7.4px;background:linear-gradient(#ececec,#d6d6d6);border:0.6px solid #a4a4a4;border-radius:1.5px"></div>
<div class="t" style="left:732.59px;top:302.90px;font-size:5.08px;font-weight:normal;color:#222;transform:scaleX(1.009);transform-origin:0 0;-webkit-text-stroke:0.15px currentColor;">Auto Clip Setup</div>
<svg class="a" style="left:774px;top:302px" width="6" height="7"><path d="M0.5 0.5 H5.5 L3 3 Z M0.5 3.5 H5.5 L3 6.5 Z" fill="#2a2ae8"/></svg>
<div class="a" style="left:535.5px;top:310.3px;width:246.5px;height:9.5px;background:#c0bfab;border-top:0.6px solid #d8d8c8"></div>
<svg class="a" style="left:538px;top:311.5px" width="30" height="7"><path d="M1 6.5 V1 L6.5 6.5Z" fill="#2a2ae8"/><rect x="10.5" y="1" width="5" height="5.5" fill="#2a2ae8"/><rect x="11.5" y="2" width="3" height="1" fill="#8a8af8"/><path d="M22.5 0.8 L25.3 3.6 L22.5 6.4 L19.7 3.6Z" fill="#7a7af0" stroke="#2a2ae8" stroke-width="1.1"/><circle cx="22.5" cy="3.6" r="0.8" fill="#c8c8f8"/></svg>
<svg class="a" style="left:764px;top:312.5px" width="7" height="6"><path d="M0.5 3 L2.5 5.5 L6.5 0.5" stroke="#2a2ae8" stroke-width="1.1" fill="none"/></svg>
<svg class="a" style="left:774px;top:312.5px" width="6" height="6"><path d="M0.6 0.6 L2.8 1.5 L5 0.6 L4.1 2.8 L5 5 L2.8 4.1 L0.6 5 L1.5 2.8 Z" fill="#2a2ae8"/></svg>
<svg class="a" style="left:690.5px;top:287.5px" width="7" height="10"><path d="M0.5 0.5 V8 L2.3 6.3 L3.6 9.2 L4.8 8.6 L3.6 5.8 L6 5.8 Z" fill="#f4f4f4" stroke="#555" stroke-width="0.6"/></svg>
<div class="a" style="left:716.2px;top:45.5px;width:1.4px;height:275px;background:rgba(90,110,170,0.12)"></div>
<div class="a" style="left:0px;top:422px;width:800px;height:11px;background:linear-gradient(#f8f8f8,#e6e6e6 50%,#d8d8d8);border-top:0.7px solid #2e2e2e"></div>
<div class="a" style="left:3.7px;top:423.7px;width:63px;height:9.3px;background:linear-gradient(#fafafa,#e0e0e0);border:0.6px solid #a8a8a8;border-radius:1px"></div>
<div class="a" style="left:7px;top:425px;width:5px;height:5.5px;background:linear-gradient(#6a7af0,#2a40d8);border:0.5px solid #2030a0"></div>
<div class="a" style="left:8px;top:426.5px;width:3px;height:1.2px;background:#cde"></div>
<div class="t" style="left:14.69px;top:426.00px;font-size:5.08px;font-weight:normal;color:#333;transform:scaleX(1.014);transform-origin:0 0;-webkit-text-stroke:0.15px currentColor;">L_DBE</div>
<svg class="a" style="left:61.5px;top:426.5px" width="5" height="4"><path d="M0.3 0.5 H4.5 L2.4 3.3Z" fill="#111"/></svg>
<div class="a" style="left:68.2px;top:424.5px;width:7.5px;height:8px;background:#fff;border:0.5px solid #ccc"></div>
<svg class="a" style="left:69px;top:425px" width="6" height="7"><path d="M1 0.5 H3.5 L5.5 2.5 V6.5 H1Z" fill="#3040e8"/><path d="M3.5 0.5 V2.5 H5.5" fill="#aab"/></svg>
<div class="a" style="left:82px;top:423.5px;width:8.7px;height:9px;background:linear-gradient(#6aa8f0,#2a6ad8);border:0.5px solid #1a4aa0"></div>
<div class="a" style="left:91.8px;top:423.5px;width:8.6px;height:9px;background:linear-gradient(#7a7a7a,#3e3e3e);border:0.5px solid #333"></div>
<div class="a" style="left:102px;top:423.5px;width:8.6px;height:9px;background:linear-gradient(#7a7a7a,#3e3e3e);border:0.5px solid #333"></div>
<div class="a" style="left:111.2px;top:423.5px;width:8.6px;height:9px;background:linear-gradient(#7a7a7a,#3e3e3e);border:0.5px solid #333"></div>
<svg class="a" style="left:323.5px;top:425px" width="5" height="6"><path d="M0.5 0.5 L4.5 3 L0.5 5.5Z" fill="#2a7ae8"/></svg>
<div class="a" style="left:332px;top:423.5px;width:0.7px;height:9px;background:#d0d0d0"></div>
<div class="t" style="left:337.27px;top:425.53px;font-size:5.69px;font-weight:normal;color:#404040;transform:scaleX(0.953);transform-origin:0 0;">w:4003 · h:2666 · n:1 · f32 · Grayscale(global) · 40.710 MB</div>
</body></html>
